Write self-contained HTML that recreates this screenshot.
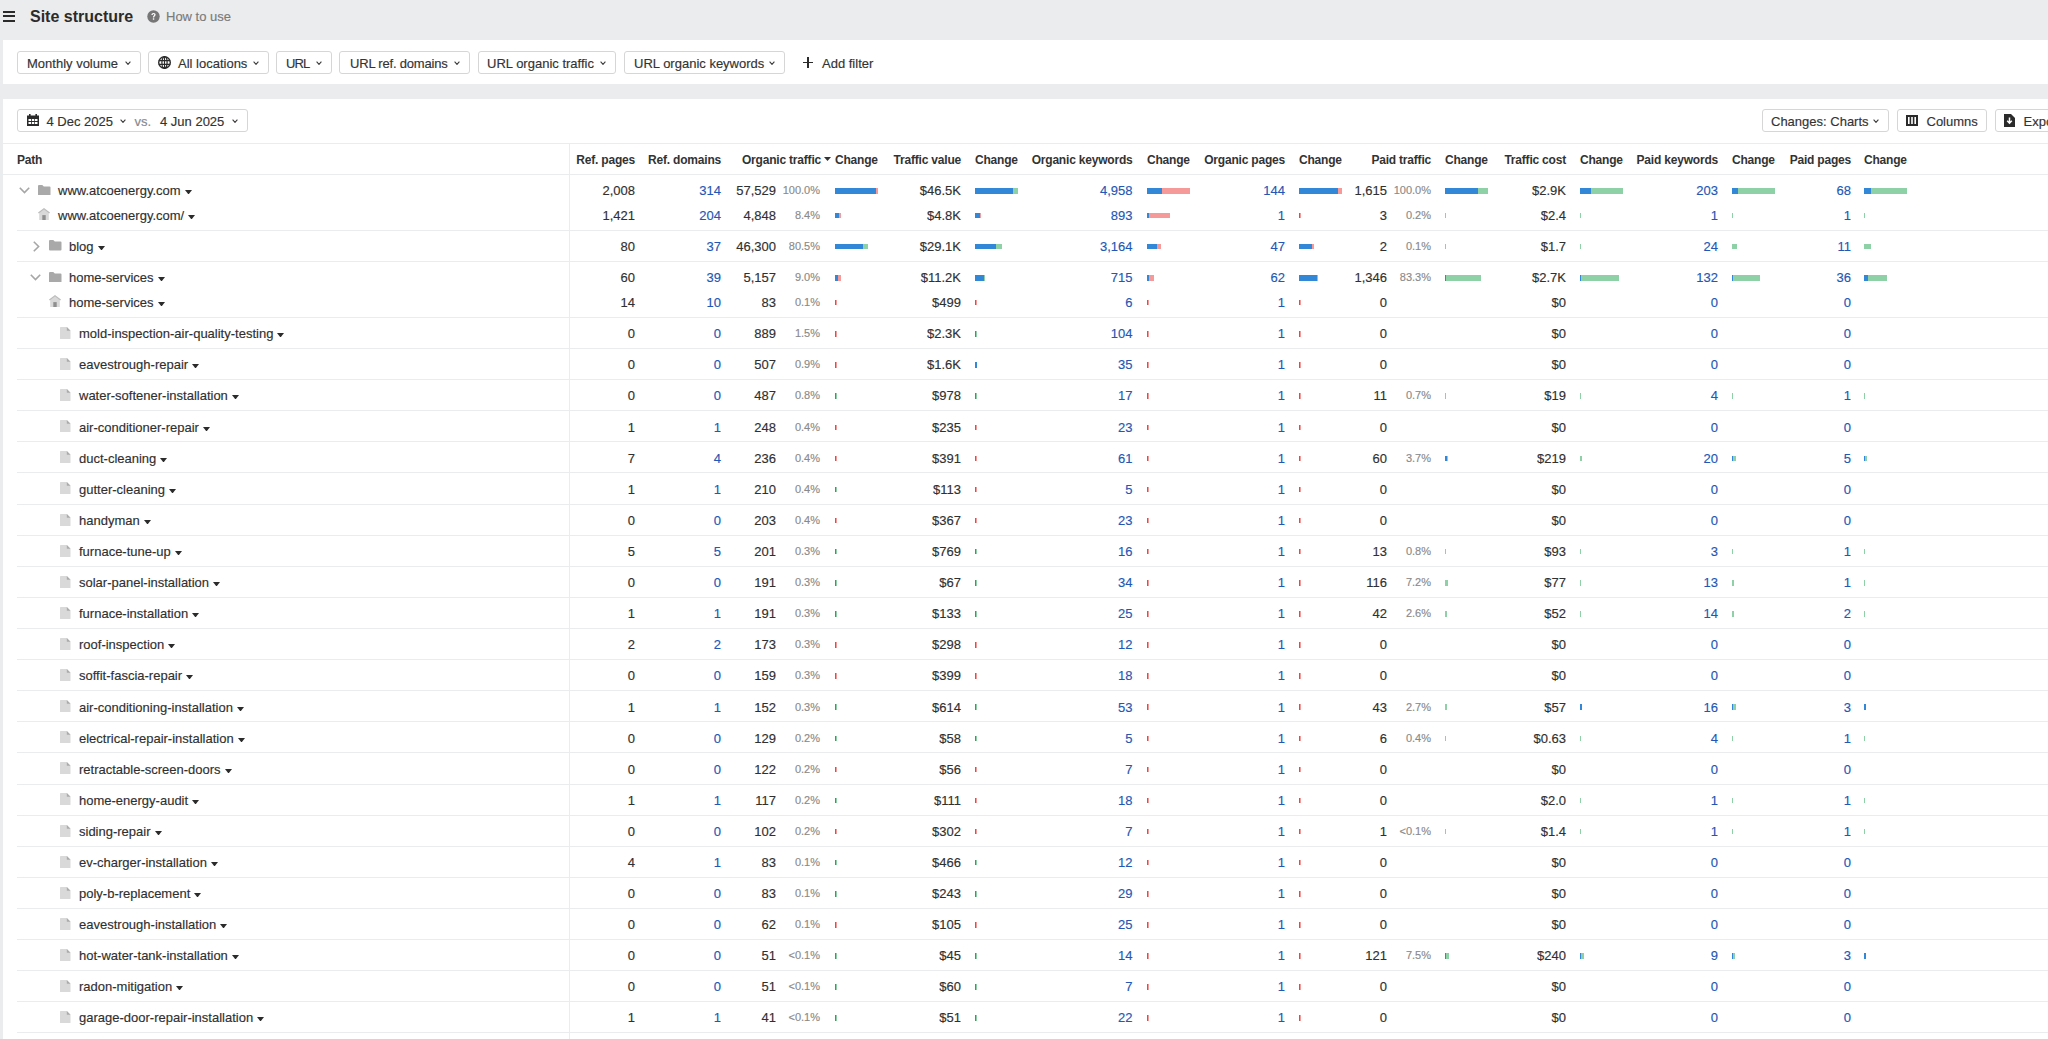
<!DOCTYPE html><html><head><meta charset="utf-8"><style>
html,body{margin:0;padding:0}
body{width:2048px;height:1039px;overflow:hidden;background:#ebecee;position:relative;font-family:"Liberation Sans", sans-serif;}
.t{position:absolute;white-space:nowrap;line-height:1;-webkit-text-stroke:0.15px currentColor;}
.b{position:absolute;}
.btn{position:absolute;box-sizing:border-box;border:1px solid #d6d6d6;border-radius:3px;background:#fff;}
</style></head><body>

<div class="b" style="left:3px;top:11px;width:12px;height:2px;background:#2b2b2b;"></div>
<div class="b" style="left:3px;top:15px;width:12px;height:2px;background:#2b2b2b;"></div>
<div class="b" style="left:3px;top:19.5px;width:12px;height:2px;background:#2b2b2b;"></div>
<div class="t" style="left:30px;top:8.80px;font-size:16px;font-weight:bold;color:#2b2b2b;-webkit-text-stroke:0;">Site structure</div>
<svg class="b" style="left:147px;top:9.6px" width="13" height="13" viewBox="0 0 13 13"><circle cx="6.5" cy="6.5" r="6.2" fill="#767676"/><path d="M4.4 4.9 C4.4 3.6 5.3 2.9 6.5 2.9 C7.8 2.9 8.6 3.7 8.6 4.7 C8.6 5.9 7.2 6.1 7.2 7.4 L5.9 7.4 C5.9 5.8 7.3 5.6 7.3 4.8 C7.3 4.3 7 4 6.5 4 C6 4 5.7 4.4 5.7 4.9 Z" fill="#fff"/><rect x="5.85" y="8.3" width="1.4" height="1.4" fill="#fff"/></svg>
<div class="t" style="left:166px;top:10.20px;font-size:13px;font-weight:normal;color:#7a7a7a;">How to use</div>
<div class="b" style="left:3px;top:40px;width:2045px;height:44px;background:#fff;"></div>
<div class="btn" style="left:17px;top:51px;width:124px;height:23px"></div>
<div class="t" style="left:27px;top:56.80px;font-size:13px;font-weight:normal;color:#333;">Monthly volume</div>
<svg class="b" style="left:125px;top:60.5px" width="6" height="4" viewBox="0 0 6 4"><path d="M0.6 0.6 L3.0 3.4 L5.4 0.6" fill="none" stroke="#3a3a3a" stroke-width="1.05"/></svg>
<div class="btn" style="left:148px;top:51px;width:121px;height:23px"></div>
<svg class="b" style="left:158px;top:56px" width="13" height="13" viewBox="0 0 13 13"><circle cx="6.5" cy="6.5" r="5.8" fill="none" stroke="#2b2b2b" stroke-width="1.4"/><ellipse cx="6.5" cy="6.5" rx="2.6" ry="5.8" fill="none" stroke="#2b2b2b" stroke-width="1.2"/><path d="M0.8 4.6 H12.2 M0.8 8.4 H12.2 M6.5 0.7 V12.3" stroke="#2b2b2b" stroke-width="1.1"/></svg>
<div class="t" style="left:178px;top:56.80px;font-size:13px;font-weight:normal;color:#333;">All locations</div>
<svg class="b" style="left:253px;top:60.5px" width="6" height="4" viewBox="0 0 6 4"><path d="M0.6 0.6 L3.0 3.4 L5.4 0.6" fill="none" stroke="#3a3a3a" stroke-width="1.05"/></svg>
<div class="btn" style="left:276px;top:51px;width:56px;height:23px"></div>
<div class="t" style="left:286px;top:56.80px;font-size:13px;font-weight:normal;color:#333;letter-spacing:-0.9px;">URL</div>
<svg class="b" style="left:316px;top:60.5px" width="6" height="4" viewBox="0 0 6 4"><path d="M0.6 0.6 L3.0 3.4 L5.4 0.6" fill="none" stroke="#3a3a3a" stroke-width="1.05"/></svg>
<div class="btn" style="left:339px;top:51px;width:131px;height:23px"></div>
<div class="t" style="left:350px;top:56.80px;font-size:13px;font-weight:normal;color:#333;letter-spacing:-0.2px;">URL ref. domains</div>
<svg class="b" style="left:454px;top:60.5px" width="6" height="4" viewBox="0 0 6 4"><path d="M0.6 0.6 L3.0 3.4 L5.4 0.6" fill="none" stroke="#3a3a3a" stroke-width="1.05"/></svg>
<div class="btn" style="left:477.5px;top:51px;width:138.0px;height:23px"></div>
<div class="t" style="left:487px;top:56.80px;font-size:13px;font-weight:normal;color:#333;">URL organic traffic</div>
<svg class="b" style="left:600px;top:60.5px" width="6" height="4" viewBox="0 0 6 4"><path d="M0.6 0.6 L3.0 3.4 L5.4 0.6" fill="none" stroke="#3a3a3a" stroke-width="1.05"/></svg>
<div class="btn" style="left:624px;top:51px;width:160.5px;height:23px"></div>
<div class="t" style="left:634px;top:56.80px;font-size:13px;font-weight:normal;color:#333;">URL organic keywords</div>
<svg class="b" style="left:769px;top:60.5px" width="6" height="4" viewBox="0 0 6 4"><path d="M0.6 0.6 L3.0 3.4 L5.4 0.6" fill="none" stroke="#3a3a3a" stroke-width="1.05"/></svg>
<div class="b" style="left:802.5px;top:61.5px;width:10.5px;height:1.6px;background:#2b2b2b;"></div>
<div class="b" style="left:807px;top:57px;width:1.6px;height:10.5px;background:#2b2b2b;"></div>
<div class="t" style="left:822px;top:56.80px;font-size:13px;font-weight:normal;color:#333;">Add filter</div>
<div class="b" style="left:3px;top:99px;width:2045px;height:940px;background:#fff;"></div>
<div class="btn" style="left:17px;top:109px;width:230.5px;height:23px"></div>
<svg class="b" style="left:27px;top:114px" width="12" height="12" viewBox="0 0 12 12"><rect x="0" y="1.5" width="12" height="10.5" fill="#2b2b2b"/><rect x="2" y="0" width="1.6" height="2" fill="#2b2b2b"/><rect x="8.4" y="0" width="1.6" height="2" fill="#2b2b2b"/><rect x="1.5" y="5" width="2.5" height="2" fill="#fff"/><rect x="4.8" y="5" width="2.5" height="2" fill="#fff"/><rect x="8" y="5" width="2.5" height="2" fill="#fff"/><rect x="1.5" y="8" width="2.5" height="2" fill="#fff"/><rect x="4.8" y="8" width="2.5" height="2" fill="#fff"/><rect x="8" y="8" width="2.5" height="2" fill="#fff"/></svg>
<div class="t" style="left:46.5px;top:115.20px;font-size:13px;font-weight:normal;color:#333;">4 Dec 2025</div>
<svg class="b" style="left:120px;top:119px" width="6" height="4" viewBox="0 0 6 4"><path d="M0.6 0.6 L3.0 3.4 L5.4 0.6" fill="none" stroke="#3a3a3a" stroke-width="1.05"/></svg>
<div class="t" style="left:134.5px;top:115.20px;font-size:13px;font-weight:normal;color:#888;">vs.</div>
<div class="t" style="left:160px;top:115.20px;font-size:13px;font-weight:normal;color:#333;">4 Jun 2025</div>
<svg class="b" style="left:231.5px;top:119px" width="6" height="4" viewBox="0 0 6 4"><path d="M0.6 0.6 L3.0 3.4 L5.4 0.6" fill="none" stroke="#3a3a3a" stroke-width="1.05"/></svg>
<div class="btn" style="left:1761.5px;top:109px;width:127.5px;height:23px"></div>
<div class="t" style="left:1771px;top:115.20px;font-size:13px;font-weight:normal;color:#333;">Changes: Charts</div>
<svg class="b" style="left:1873px;top:119px" width="6" height="4" viewBox="0 0 6 4"><path d="M0.6 0.6 L3.0 3.4 L5.4 0.6" fill="none" stroke="#3a3a3a" stroke-width="1.05"/></svg>
<div class="btn" style="left:1896.5px;top:109px;width:90.5px;height:23px"></div>
<svg class="b" style="left:1906px;top:115px" width="12" height="11" viewBox="0 0 12 11"><rect x="0" y="0" width="12" height="11" fill="#2b2b2b"/><rect x="2" y="2" width="1.6" height="7" fill="#fff"/><rect x="5.2" y="2" width="1.6" height="7" fill="#fff"/><rect x="8.4" y="2" width="1.6" height="7" fill="#fff"/></svg>
<div class="t" style="left:1926.5px;top:115.20px;font-size:13px;font-weight:normal;color:#333;">Columns</div>
<div class="btn" style="left:1994.5px;top:109px;width:65.5px;height:23px"></div>
<svg class="b" style="left:2004px;top:114px" width="11" height="13" viewBox="0 0 11 13"><path d="M0 0 H7 L11 4 V13 H0 Z" fill="#2b2b2b"/><path d="M5.5 3.5 V9 M3.2 6.8 L5.5 9.2 L7.8 6.8" stroke="#fff" stroke-width="1.5" fill="none"/></svg>
<div class="t" style="left:2023.5px;top:115.20px;font-size:13px;font-weight:normal;color:#333;">Export</div>
<div class="b" style="left:3px;top:143px;width:2045px;height:1px;background:#ebecee;"></div>
<div class="b" style="left:3px;top:174px;width:2045px;height:1px;background:#ebecee;"></div>
<div class="b" style="left:569px;top:143px;width:1px;height:900px;background:#ebecee;"></div>
<div class="t" style="left:17px;top:153.50px;font-size:12px;font-weight:bold;color:#333;letter-spacing:-0.2px;-webkit-text-stroke:0;">Path</div>
<div class="t r" style="right:1413px;top:153.50px;font-size:12px;font-weight:bold;color:#333;letter-spacing:-0.2px;-webkit-text-stroke:0;">Ref. pages</div>
<div class="t r" style="right:1327px;top:153.50px;font-size:12px;font-weight:bold;color:#333;letter-spacing:-0.2px;-webkit-text-stroke:0;">Ref. domains</div>
<div class="t r" style="right:1227px;top:153.50px;font-size:12px;font-weight:bold;color:#333;letter-spacing:-0.2px;-webkit-text-stroke:0;">Organic traffic</div>
<svg class="b" style="left:824px;top:157px" width="7" height="4" viewBox="0 0 7 4"><path d="M0 0 L7 0 L3.5 4 Z" fill="#333"/></svg>
<div class="t" style="left:835px;top:153.50px;font-size:12px;font-weight:bold;color:#333;letter-spacing:-0.2px;-webkit-text-stroke:0;">Change</div>
<div class="t" style="left:975px;top:153.50px;font-size:12px;font-weight:bold;color:#333;letter-spacing:-0.2px;-webkit-text-stroke:0;">Change</div>
<div class="t" style="left:1147px;top:153.50px;font-size:12px;font-weight:bold;color:#333;letter-spacing:-0.2px;-webkit-text-stroke:0;">Change</div>
<div class="t" style="left:1299px;top:153.50px;font-size:12px;font-weight:bold;color:#333;letter-spacing:-0.2px;-webkit-text-stroke:0;">Change</div>
<div class="t" style="left:1445px;top:153.50px;font-size:12px;font-weight:bold;color:#333;letter-spacing:-0.2px;-webkit-text-stroke:0;">Change</div>
<div class="t" style="left:1580px;top:153.50px;font-size:12px;font-weight:bold;color:#333;letter-spacing:-0.2px;-webkit-text-stroke:0;">Change</div>
<div class="t" style="left:1732px;top:153.50px;font-size:12px;font-weight:bold;color:#333;letter-spacing:-0.2px;-webkit-text-stroke:0;">Change</div>
<div class="t" style="left:1864px;top:153.50px;font-size:12px;font-weight:bold;color:#333;letter-spacing:-0.2px;-webkit-text-stroke:0;">Change</div>
<div class="t r" style="right:1087px;top:153.50px;font-size:12px;font-weight:bold;color:#333;letter-spacing:-0.2px;-webkit-text-stroke:0;">Traffic value</div>
<div class="t r" style="right:915.5px;top:153.50px;font-size:12px;font-weight:bold;color:#333;letter-spacing:-0.2px;-webkit-text-stroke:0;">Organic keywords</div>
<div class="t r" style="right:763px;top:153.50px;font-size:12px;font-weight:bold;color:#333;letter-spacing:-0.2px;-webkit-text-stroke:0;">Organic pages</div>
<div class="t r" style="right:617px;top:153.50px;font-size:12px;font-weight:bold;color:#333;letter-spacing:-0.2px;-webkit-text-stroke:0;">Paid traffic</div>
<div class="t r" style="right:482px;top:153.50px;font-size:12px;font-weight:bold;color:#333;letter-spacing:-0.2px;-webkit-text-stroke:0;">Traffic cost</div>
<div class="t r" style="right:330px;top:153.50px;font-size:12px;font-weight:bold;color:#333;letter-spacing:-0.2px;-webkit-text-stroke:0;">Paid keywords</div>
<div class="t r" style="right:197px;top:153.50px;font-size:12px;font-weight:bold;color:#333;letter-spacing:-0.2px;-webkit-text-stroke:0;">Paid pages</div>
<svg class="b" style="left:19px;top:186.9px" width="11" height="7" viewBox="0 0 11 7"><path d="M0.8 0.8 L5.5 5.6 L10.2 0.8" fill="none" stroke="#a6a6a6" stroke-width="1.6"/></svg>
<svg class="b" style="left:38px;top:184.7px" width="12.5" height="10.5" viewBox="0 0 12.5 10.5"><path d="M0 1 Q0 0 1 0 H4.3 L5.8 1.5 H11.5 Q12.5 1.5 12.5 2.5 V9.5 Q12.5 10.5 11.5 10.5 H1 Q0 10.5 0 9.5 Z" fill="#a9a9a9"/></svg>
<div class="t" style="left:58px;top:184.00px;font-size:13px;color:#303030">www.atcoenergy.com<span style="display:inline-block;width:4px"></span><svg style="vertical-align:1px" width="7" height="4.5" viewBox="0 0 7 4.5"><path d="M0 0 L7 0 L3.5 4.5 Z" fill="#2b2b2b"/></svg></div>
<div class="t r" style="right:1413px;top:184.00px;font-size:13px;font-weight:normal;color:#303030;">2,008</div>
<div class="t r" style="right:1327px;top:184.00px;font-size:13px;font-weight:normal;color:#2357b5;">314</div>
<div class="t r" style="right:1272px;top:184.00px;font-size:13px;font-weight:normal;color:#303030;">57,529</div>
<div class="t r" style="right:1228px;top:185.20px;font-size:11px;font-weight:normal;color:#8a8a8a;">100.0%</div>
<div class="t r" style="right:1087px;top:184.00px;font-size:13px;font-weight:normal;color:#303030;">$46.5K</div>
<div class="t r" style="right:915.5px;top:184.00px;font-size:13px;font-weight:normal;color:#2357b5;">4,958</div>
<div class="t r" style="right:763px;top:184.00px;font-size:13px;font-weight:normal;color:#2357b5;">144</div>
<div class="t r" style="right:661px;top:184.00px;font-size:13px;font-weight:normal;color:#303030;">1,615</div>
<div class="t r" style="right:617px;top:185.20px;font-size:11px;font-weight:normal;color:#8a8a8a;">100.0%</div>
<div class="t r" style="right:482px;top:184.00px;font-size:13px;font-weight:normal;color:#303030;">$2.9K</div>
<div class="t r" style="right:330px;top:184.00px;font-size:13px;font-weight:normal;color:#2357b5;">203</div>
<div class="t r" style="right:197px;top:184.00px;font-size:13px;font-weight:normal;color:#2357b5;">68</div>
<div class="b" style="left:835px;top:188.25px;width:41px;height:5.5px;background:#3287d6;"></div>
<div class="b" style="left:876px;top:188.25px;width:1.5px;height:5.5px;background:#f59a99;"></div>
<div class="b" style="left:975px;top:188.25px;width:37.5px;height:5.5px;background:#3287d6;"></div>
<div class="b" style="left:1012.5px;top:188.25px;width:5.5px;height:5.5px;background:#8fd1a7;"></div>
<div class="b" style="left:1147px;top:188.25px;width:14.7px;height:5.5px;background:#3287d6;"></div>
<div class="b" style="left:1161.7px;top:188.25px;width:28.3px;height:5.5px;background:#f59a99;"></div>
<div class="b" style="left:1299px;top:188.25px;width:38.6px;height:5.5px;background:#3287d6;"></div>
<div class="b" style="left:1337.6px;top:188.25px;width:4.4px;height:5.5px;background:#f59a99;"></div>
<div class="b" style="left:1445px;top:188.25px;width:33px;height:5.5px;background:#3287d6;"></div>
<div class="b" style="left:1478px;top:188.25px;width:10px;height:5.5px;background:#8fd1a7;"></div>
<div class="b" style="left:1580px;top:188.25px;width:11.4px;height:5.5px;background:#3287d6;"></div>
<div class="b" style="left:1591.4px;top:188.25px;width:31.6px;height:5.5px;background:#8fd1a7;"></div>
<div class="b" style="left:1732px;top:188.25px;width:5.8px;height:5.5px;background:#3287d6;"></div>
<div class="b" style="left:1737.8px;top:188.25px;width:37.2px;height:5.5px;background:#8fd1a7;"></div>
<div class="b" style="left:1864px;top:188.25px;width:6.8px;height:5.5px;background:#3287d6;"></div>
<div class="b" style="left:1870.8px;top:188.25px;width:36.2px;height:5.5px;background:#8fd1a7;"></div>
<div class="b" style="left:17px;top:230px;width:2031px;height:1px;background:#ebecee;"></div>
<svg class="b" style="left:38px;top:207.89999999999998px" width="12" height="12" viewBox="0 0 12 12"><path d="M1.2 4.9 L6 1.0 L10.8 4.9 V12 H1.2 Z" fill="#d9d9d9"/><path d="M0 4.6 L6 0 L12 4.6 L11.1 5.5 L6 1.6 L0.9 5.5 Z" fill="#bcbcbc"/><rect x="4.3" y="7.1" width="3.4" height="4.9" fill="#8f8f8f"/></svg>
<div class="t" style="left:58px;top:209.00px;font-size:13px;color:#303030">www.atcoenergy.com/<span style="display:inline-block;width:4px"></span><svg style="vertical-align:1px" width="7" height="4.5" viewBox="0 0 7 4.5"><path d="M0 0 L7 0 L3.5 4.5 Z" fill="#2b2b2b"/></svg></div>
<div class="t r" style="right:1413px;top:209.00px;font-size:13px;font-weight:normal;color:#303030;">1,421</div>
<div class="t r" style="right:1327px;top:209.00px;font-size:13px;font-weight:normal;color:#2357b5;">204</div>
<div class="t r" style="right:1272px;top:209.00px;font-size:13px;font-weight:normal;color:#303030;">4,848</div>
<div class="t r" style="right:1228px;top:210.20px;font-size:11px;font-weight:normal;color:#8a8a8a;">8.4%</div>
<div class="t r" style="right:1087px;top:209.00px;font-size:13px;font-weight:normal;color:#303030;">$4.8K</div>
<div class="t r" style="right:915.5px;top:209.00px;font-size:13px;font-weight:normal;color:#2357b5;">893</div>
<div class="t r" style="right:763px;top:209.00px;font-size:13px;font-weight:normal;color:#2357b5;">1</div>
<div class="t r" style="right:661px;top:209.00px;font-size:13px;font-weight:normal;color:#303030;">3</div>
<div class="t r" style="right:617px;top:210.20px;font-size:11px;font-weight:normal;color:#8a8a8a;">0.2%</div>
<div class="t r" style="right:482px;top:209.00px;font-size:13px;font-weight:normal;color:#303030;">$2.4</div>
<div class="t r" style="right:330px;top:209.00px;font-size:13px;font-weight:normal;color:#2357b5;">1</div>
<div class="t r" style="right:197px;top:209.00px;font-size:13px;font-weight:normal;color:#2357b5;">1</div>
<div class="b" style="left:835px;top:212.95px;width:4px;height:5.5px;background:#3287d6;"></div>
<div class="b" style="left:839px;top:212.95px;width:2px;height:5.5px;background:#f59a99;"></div>
<div class="b" style="left:975px;top:212.95px;width:4.5px;height:5.5px;background:#3287d6;"></div>
<div class="b" style="left:979.5px;top:212.95px;width:1.5px;height:5.5px;background:#f59a99;"></div>
<div class="b" style="left:1147px;top:212.95px;width:2px;height:5.5px;background:#3287d6;"></div>
<div class="b" style="left:1149px;top:212.95px;width:21px;height:5.5px;background:#f59a99;"></div>
<div class="b" style="left:1299px;top:212.95px;width:1px;height:5.5px;background:#3287d6;"></div>
<div class="b" style="left:1300px;top:212.95px;width:1px;height:5.5px;background:#f59a99;"></div>
<div class="b" style="left:1445px;top:212.95px;width:1px;height:5.5px;background:#8fd1a7;"></div>
<div class="b" style="left:1580px;top:212.95px;width:1px;height:5.5px;background:#8fd1a7;"></div>
<div class="b" style="left:1732px;top:212.95px;width:1px;height:5.5px;background:#8fd1a7;"></div>
<div class="b" style="left:1864px;top:212.95px;width:1px;height:5.5px;background:#8fd1a7;"></div>
<svg class="b" style="left:33px;top:240.7px" width="7" height="11" viewBox="0 0 7 11"><path d="M0.8 0.8 L5.6 5.5 L0.8 10.2" fill="none" stroke="#a6a6a6" stroke-width="1.6"/></svg>
<svg class="b" style="left:49px;top:240.39999999999998px" width="12.5" height="10.5" viewBox="0 0 12.5 10.5"><path d="M0 1 Q0 0 1 0 H4.3 L5.8 1.5 H11.5 Q12.5 1.5 12.5 2.5 V9.5 Q12.5 10.5 11.5 10.5 H1 Q0 10.5 0 9.5 Z" fill="#a9a9a9"/></svg>
<div class="t" style="left:69px;top:240.00px;font-size:13px;color:#303030">blog<span style="display:inline-block;width:4px"></span><svg style="vertical-align:1px" width="7" height="4.5" viewBox="0 0 7 4.5"><path d="M0 0 L7 0 L3.5 4.5 Z" fill="#2b2b2b"/></svg></div>
<div class="t r" style="right:1413px;top:240.00px;font-size:13px;font-weight:normal;color:#303030;">80</div>
<div class="t r" style="right:1327px;top:240.00px;font-size:13px;font-weight:normal;color:#2357b5;">37</div>
<div class="t r" style="right:1272px;top:240.00px;font-size:13px;font-weight:normal;color:#303030;">46,300</div>
<div class="t r" style="right:1228px;top:241.20px;font-size:11px;font-weight:normal;color:#8a8a8a;">80.5%</div>
<div class="t r" style="right:1087px;top:240.00px;font-size:13px;font-weight:normal;color:#303030;">$29.1K</div>
<div class="t r" style="right:915.5px;top:240.00px;font-size:13px;font-weight:normal;color:#2357b5;">3,164</div>
<div class="t r" style="right:763px;top:240.00px;font-size:13px;font-weight:normal;color:#2357b5;">47</div>
<div class="t r" style="right:661px;top:240.00px;font-size:13px;font-weight:normal;color:#303030;">2</div>
<div class="t r" style="right:617px;top:241.20px;font-size:11px;font-weight:normal;color:#8a8a8a;">0.1%</div>
<div class="t r" style="right:482px;top:240.00px;font-size:13px;font-weight:normal;color:#303030;">$1.7</div>
<div class="t r" style="right:330px;top:240.00px;font-size:13px;font-weight:normal;color:#2357b5;">24</div>
<div class="t r" style="right:197px;top:240.00px;font-size:13px;font-weight:normal;color:#2357b5;">11</div>
<div class="b" style="left:835px;top:243.95px;width:27.5px;height:5.5px;background:#3287d6;"></div>
<div class="b" style="left:862.5px;top:243.95px;width:5px;height:5.5px;background:#8fd1a7;"></div>
<div class="b" style="left:975px;top:243.95px;width:20.5px;height:5.5px;background:#3287d6;"></div>
<div class="b" style="left:995.5px;top:243.95px;width:6px;height:5.5px;background:#8fd1a7;"></div>
<div class="b" style="left:1147px;top:243.95px;width:10px;height:5.5px;background:#3287d6;"></div>
<div class="b" style="left:1157px;top:243.95px;width:4px;height:5.5px;background:#f59a99;"></div>
<div class="b" style="left:1299px;top:243.95px;width:13px;height:5.5px;background:#3287d6;"></div>
<div class="b" style="left:1312px;top:243.95px;width:1.5px;height:5.5px;background:#f59a99;"></div>
<div class="b" style="left:1445px;top:243.95px;width:1px;height:5.5px;background:#8fd1a7;"></div>
<div class="b" style="left:1580px;top:243.95px;width:1px;height:5.5px;background:#8fd1a7;"></div>
<div class="b" style="left:1732px;top:243.95px;width:5px;height:5.5px;background:#8fd1a7;"></div>
<div class="b" style="left:1864px;top:243.95px;width:6.5px;height:5.5px;background:#8fd1a7;"></div>
<div class="b" style="left:17px;top:261px;width:2031px;height:1px;background:#ebecee;"></div>
<svg class="b" style="left:30px;top:273.9px" width="11" height="7" viewBox="0 0 11 7"><path d="M0.8 0.8 L5.5 5.6 L10.2 0.8" fill="none" stroke="#a6a6a6" stroke-width="1.6"/></svg>
<svg class="b" style="left:49px;top:271.7px" width="12.5" height="10.5" viewBox="0 0 12.5 10.5"><path d="M0 1 Q0 0 1 0 H4.3 L5.8 1.5 H11.5 Q12.5 1.5 12.5 2.5 V9.5 Q12.5 10.5 11.5 10.5 H1 Q0 10.5 0 9.5 Z" fill="#a9a9a9"/></svg>
<div class="t" style="left:69px;top:271.00px;font-size:13px;color:#303030">home-services<span style="display:inline-block;width:4px"></span><svg style="vertical-align:1px" width="7" height="4.5" viewBox="0 0 7 4.5"><path d="M0 0 L7 0 L3.5 4.5 Z" fill="#2b2b2b"/></svg></div>
<div class="t r" style="right:1413px;top:271.00px;font-size:13px;font-weight:normal;color:#303030;">60</div>
<div class="t r" style="right:1327px;top:271.00px;font-size:13px;font-weight:normal;color:#2357b5;">39</div>
<div class="t r" style="right:1272px;top:271.00px;font-size:13px;font-weight:normal;color:#303030;">5,157</div>
<div class="t r" style="right:1228px;top:272.20px;font-size:11px;font-weight:normal;color:#8a8a8a;">9.0%</div>
<div class="t r" style="right:1087px;top:271.00px;font-size:13px;font-weight:normal;color:#303030;">$11.2K</div>
<div class="t r" style="right:915.5px;top:271.00px;font-size:13px;font-weight:normal;color:#2357b5;">715</div>
<div class="t r" style="right:763px;top:271.00px;font-size:13px;font-weight:normal;color:#2357b5;">62</div>
<div class="t r" style="right:661px;top:271.00px;font-size:13px;font-weight:normal;color:#303030;">1,346</div>
<div class="t r" style="right:617px;top:272.20px;font-size:11px;font-weight:normal;color:#8a8a8a;">83.3%</div>
<div class="t r" style="right:482px;top:271.00px;font-size:13px;font-weight:normal;color:#303030;">$2.7K</div>
<div class="t r" style="right:330px;top:271.00px;font-size:13px;font-weight:normal;color:#2357b5;">132</div>
<div class="t r" style="right:197px;top:271.00px;font-size:13px;font-weight:normal;color:#2357b5;">36</div>
<div class="b" style="left:835px;top:275.25px;width:3px;height:5.5px;background:#3287d6;"></div>
<div class="b" style="left:838px;top:275.25px;width:3px;height:5.5px;background:#f59a99;"></div>
<div class="b" style="left:975px;top:275.25px;width:8.5px;height:5.5px;background:#3287d6;"></div>
<div class="b" style="left:983.5px;top:275.25px;width:1px;height:5.5px;background:#8fd1a7;"></div>
<div class="b" style="left:1147px;top:275.25px;width:2px;height:5.5px;background:#3287d6;"></div>
<div class="b" style="left:1149px;top:275.25px;width:5px;height:5.5px;background:#f59a99;"></div>
<div class="b" style="left:1299px;top:275.25px;width:17.5px;height:5.5px;background:#3287d6;"></div>
<div class="b" style="left:1316.5px;top:275.25px;width:1.5px;height:5.5px;background:#f59a99;"></div>
<div class="b" style="left:1445px;top:275.25px;width:1px;height:5.5px;background:#3287d6;"></div>
<div class="b" style="left:1446px;top:275.25px;width:35px;height:5.5px;background:#8fd1a7;"></div>
<div class="b" style="left:1580px;top:275.25px;width:1px;height:5.5px;background:#3287d6;"></div>
<div class="b" style="left:1581px;top:275.25px;width:38px;height:5.5px;background:#8fd1a7;"></div>
<div class="b" style="left:1732px;top:275.25px;width:1px;height:5.5px;background:#3287d6;"></div>
<div class="b" style="left:1733px;top:275.25px;width:27px;height:5.5px;background:#8fd1a7;"></div>
<div class="b" style="left:1864px;top:275.25px;width:4px;height:5.5px;background:#3287d6;"></div>
<div class="b" style="left:1868px;top:275.25px;width:18.5px;height:5.5px;background:#8fd1a7;"></div>
<svg class="b" style="left:49px;top:294.7px" width="12" height="12" viewBox="0 0 12 12"><path d="M1.2 4.9 L6 1.0 L10.8 4.9 V12 H1.2 Z" fill="#d9d9d9"/><path d="M0 4.6 L6 0 L12 4.6 L11.1 5.5 L6 1.6 L0.9 5.5 Z" fill="#bcbcbc"/><rect x="4.3" y="7.1" width="3.4" height="4.9" fill="#8f8f8f"/></svg>
<div class="t" style="left:69px;top:296.00px;font-size:13px;color:#303030">home-services<span style="display:inline-block;width:4px"></span><svg style="vertical-align:1px" width="7" height="4.5" viewBox="0 0 7 4.5"><path d="M0 0 L7 0 L3.5 4.5 Z" fill="#2b2b2b"/></svg></div>
<div class="t r" style="right:1413px;top:296.00px;font-size:13px;font-weight:normal;color:#303030;">14</div>
<div class="t r" style="right:1327px;top:296.00px;font-size:13px;font-weight:normal;color:#2357b5;">10</div>
<div class="t r" style="right:1272px;top:296.00px;font-size:13px;font-weight:normal;color:#303030;">83</div>
<div class="t r" style="right:1228px;top:297.20px;font-size:11px;font-weight:normal;color:#8a8a8a;">0.1%</div>
<div class="t r" style="right:1087px;top:296.00px;font-size:13px;font-weight:normal;color:#303030;">$499</div>
<div class="t r" style="right:915.5px;top:296.00px;font-size:13px;font-weight:normal;color:#2357b5;">6</div>
<div class="t r" style="right:763px;top:296.00px;font-size:13px;font-weight:normal;color:#2357b5;">1</div>
<div class="t r" style="right:661px;top:296.00px;font-size:13px;font-weight:normal;color:#303030;">0</div>
<div class="t r" style="right:482px;top:296.00px;font-size:13px;font-weight:normal;color:#303030;">$0</div>
<div class="t r" style="right:330px;top:296.00px;font-size:13px;font-weight:normal;color:#2357b5;">0</div>
<div class="t r" style="right:197px;top:296.00px;font-size:13px;font-weight:normal;color:#2357b5;">0</div>
<div class="b" style="left:835px;top:299.75px;width:1px;height:5.5px;background:#3287d6;"></div>
<div class="b" style="left:836px;top:299.75px;width:1px;height:5.5px;background:#f59a99;"></div>
<div class="b" style="left:975px;top:299.75px;width:1px;height:5.5px;background:#3287d6;"></div>
<div class="b" style="left:976px;top:299.75px;width:1px;height:5.5px;background:#f59a99;"></div>
<div class="b" style="left:1147px;top:299.75px;width:1px;height:5.5px;background:#3287d6;"></div>
<div class="b" style="left:1148px;top:299.75px;width:1px;height:5.5px;background:#f59a99;"></div>
<div class="b" style="left:1299px;top:299.75px;width:1px;height:5.5px;background:#3287d6;"></div>
<div class="b" style="left:1300px;top:299.75px;width:1px;height:5.5px;background:#f59a99;"></div>
<div class="b" style="left:17px;top:317px;width:2031px;height:1px;background:#ebecee;"></div>
<svg class="b" style="left:60px;top:326.9px" width="10.5" height="12" viewBox="0 0 10.5 12"><path d="M0.6 0 H6.8 L10.5 3.7 V11.4 Q10.5 12 9.9 12 H0.6 Q0 12 0 11.4 V0.6 Q0 0 0.6 0 Z" fill="#d9d9d9"/><path d="M6.8 0 L10.5 3.7 H6.8 Z" fill="#ababab"/></svg>
<div class="t" style="left:79px;top:327.00px;font-size:13px;color:#303030">mold-inspection-air-quality-testing<span style="display:inline-block;width:4px"></span><svg style="vertical-align:1px" width="7" height="4.5" viewBox="0 0 7 4.5"><path d="M0 0 L7 0 L3.5 4.5 Z" fill="#2b2b2b"/></svg></div>
<div class="t r" style="right:1413px;top:327.00px;font-size:13px;font-weight:normal;color:#303030;">0</div>
<div class="t r" style="right:1327px;top:327.00px;font-size:13px;font-weight:normal;color:#2357b5;">0</div>
<div class="t r" style="right:1272px;top:327.00px;font-size:13px;font-weight:normal;color:#303030;">889</div>
<div class="t r" style="right:1228px;top:328.20px;font-size:11px;font-weight:normal;color:#8a8a8a;">1.5%</div>
<div class="t r" style="right:1087px;top:327.00px;font-size:13px;font-weight:normal;color:#303030;">$2.3K</div>
<div class="t r" style="right:915.5px;top:327.00px;font-size:13px;font-weight:normal;color:#2357b5;">104</div>
<div class="t r" style="right:763px;top:327.00px;font-size:13px;font-weight:normal;color:#2357b5;">1</div>
<div class="t r" style="right:661px;top:327.00px;font-size:13px;font-weight:normal;color:#303030;">0</div>
<div class="t r" style="right:482px;top:327.00px;font-size:13px;font-weight:normal;color:#303030;">$0</div>
<div class="t r" style="right:330px;top:327.00px;font-size:13px;font-weight:normal;color:#2357b5;">0</div>
<div class="t r" style="right:197px;top:327.00px;font-size:13px;font-weight:normal;color:#2357b5;">0</div>
<div class="b" style="left:835px;top:331.25px;width:1px;height:5.5px;background:#3287d6;"></div>
<div class="b" style="left:836px;top:331.25px;width:1px;height:5.5px;background:#f59a99;"></div>
<div class="b" style="left:975px;top:331.25px;width:1px;height:5.5px;background:#3287d6;"></div>
<div class="b" style="left:976px;top:331.25px;width:1px;height:5.5px;background:#8fd1a7;"></div>
<div class="b" style="left:1147px;top:331.25px;width:1px;height:5.5px;background:#3287d6;"></div>
<div class="b" style="left:1148px;top:331.25px;width:1px;height:5.5px;background:#f59a99;"></div>
<div class="b" style="left:1299px;top:331.25px;width:1px;height:5.5px;background:#3287d6;"></div>
<div class="b" style="left:1300px;top:331.25px;width:1px;height:5.5px;background:#f59a99;"></div>
<div class="b" style="left:17px;top:348px;width:2031px;height:1px;background:#ebecee;"></div>
<svg class="b" style="left:60px;top:358.0px" width="10.5" height="12" viewBox="0 0 10.5 12"><path d="M0.6 0 H6.8 L10.5 3.7 V11.4 Q10.5 12 9.9 12 H0.6 Q0 12 0 11.4 V0.6 Q0 0 0.6 0 Z" fill="#d9d9d9"/><path d="M6.8 0 L10.5 3.7 H6.8 Z" fill="#ababab"/></svg>
<div class="t" style="left:79px;top:358.00px;font-size:13px;color:#303030">eavestrough-repair<span style="display:inline-block;width:4px"></span><svg style="vertical-align:1px" width="7" height="4.5" viewBox="0 0 7 4.5"><path d="M0 0 L7 0 L3.5 4.5 Z" fill="#2b2b2b"/></svg></div>
<div class="t r" style="right:1413px;top:358.00px;font-size:13px;font-weight:normal;color:#303030;">0</div>
<div class="t r" style="right:1327px;top:358.00px;font-size:13px;font-weight:normal;color:#2357b5;">0</div>
<div class="t r" style="right:1272px;top:358.00px;font-size:13px;font-weight:normal;color:#303030;">507</div>
<div class="t r" style="right:1228px;top:359.20px;font-size:11px;font-weight:normal;color:#8a8a8a;">0.9%</div>
<div class="t r" style="right:1087px;top:358.00px;font-size:13px;font-weight:normal;color:#303030;">$1.6K</div>
<div class="t r" style="right:915.5px;top:358.00px;font-size:13px;font-weight:normal;color:#2357b5;">35</div>
<div class="t r" style="right:763px;top:358.00px;font-size:13px;font-weight:normal;color:#2357b5;">1</div>
<div class="t r" style="right:661px;top:358.00px;font-size:13px;font-weight:normal;color:#303030;">0</div>
<div class="t r" style="right:482px;top:358.00px;font-size:13px;font-weight:normal;color:#303030;">$0</div>
<div class="t r" style="right:330px;top:358.00px;font-size:13px;font-weight:normal;color:#2357b5;">0</div>
<div class="t r" style="right:197px;top:358.00px;font-size:13px;font-weight:normal;color:#2357b5;">0</div>
<div class="b" style="left:835px;top:362.35px;width:1px;height:5.5px;background:#3287d6;"></div>
<div class="b" style="left:836px;top:362.35px;width:1px;height:5.5px;background:#f59a99;"></div>
<div class="b" style="left:975px;top:362.35px;width:2px;height:5.5px;background:#3287d6;"></div>
<div class="b" style="left:1147px;top:362.35px;width:1px;height:5.5px;background:#3287d6;"></div>
<div class="b" style="left:1148px;top:362.35px;width:1px;height:5.5px;background:#f59a99;"></div>
<div class="b" style="left:1299px;top:362.35px;width:1px;height:5.5px;background:#3287d6;"></div>
<div class="b" style="left:1300px;top:362.35px;width:1px;height:5.5px;background:#f59a99;"></div>
<div class="b" style="left:17px;top:379px;width:2031px;height:1px;background:#ebecee;"></div>
<svg class="b" style="left:60px;top:389.09999999999997px" width="10.5" height="12" viewBox="0 0 10.5 12"><path d="M0.6 0 H6.8 L10.5 3.7 V11.4 Q10.5 12 9.9 12 H0.6 Q0 12 0 11.4 V0.6 Q0 0 0.6 0 Z" fill="#d9d9d9"/><path d="M6.8 0 L10.5 3.7 H6.8 Z" fill="#ababab"/></svg>
<div class="t" style="left:79px;top:389.00px;font-size:13px;color:#303030">water-softener-installation<span style="display:inline-block;width:4px"></span><svg style="vertical-align:1px" width="7" height="4.5" viewBox="0 0 7 4.5"><path d="M0 0 L7 0 L3.5 4.5 Z" fill="#2b2b2b"/></svg></div>
<div class="t r" style="right:1413px;top:389.00px;font-size:13px;font-weight:normal;color:#303030;">0</div>
<div class="t r" style="right:1327px;top:389.00px;font-size:13px;font-weight:normal;color:#2357b5;">0</div>
<div class="t r" style="right:1272px;top:389.00px;font-size:13px;font-weight:normal;color:#303030;">487</div>
<div class="t r" style="right:1228px;top:390.20px;font-size:11px;font-weight:normal;color:#8a8a8a;">0.8%</div>
<div class="t r" style="right:1087px;top:389.00px;font-size:13px;font-weight:normal;color:#303030;">$978</div>
<div class="t r" style="right:915.5px;top:389.00px;font-size:13px;font-weight:normal;color:#2357b5;">17</div>
<div class="t r" style="right:763px;top:389.00px;font-size:13px;font-weight:normal;color:#2357b5;">1</div>
<div class="t r" style="right:661px;top:389.00px;font-size:13px;font-weight:normal;color:#303030;">11</div>
<div class="t r" style="right:617px;top:390.20px;font-size:11px;font-weight:normal;color:#8a8a8a;">0.7%</div>
<div class="t r" style="right:482px;top:389.00px;font-size:13px;font-weight:normal;color:#303030;">$19</div>
<div class="t r" style="right:330px;top:389.00px;font-size:13px;font-weight:normal;color:#2357b5;">4</div>
<div class="t r" style="right:197px;top:389.00px;font-size:13px;font-weight:normal;color:#2357b5;">1</div>
<div class="b" style="left:835px;top:393.45px;width:1px;height:5.5px;background:#3287d6;"></div>
<div class="b" style="left:836px;top:393.45px;width:1px;height:5.5px;background:#8fd1a7;"></div>
<div class="b" style="left:975px;top:393.45px;width:1px;height:5.5px;background:#3287d6;"></div>
<div class="b" style="left:976px;top:393.45px;width:1px;height:5.5px;background:#8fd1a7;"></div>
<div class="b" style="left:1147px;top:393.45px;width:1px;height:5.5px;background:#3287d6;"></div>
<div class="b" style="left:1148px;top:393.45px;width:1px;height:5.5px;background:#f59a99;"></div>
<div class="b" style="left:1299px;top:393.45px;width:1px;height:5.5px;background:#3287d6;"></div>
<div class="b" style="left:1300px;top:393.45px;width:1px;height:5.5px;background:#f59a99;"></div>
<div class="b" style="left:1445px;top:393.45px;width:1px;height:5.5px;background:#8fd1a7;"></div>
<div class="b" style="left:1580px;top:393.45px;width:1px;height:5.5px;background:#8fd1a7;"></div>
<div class="b" style="left:1732px;top:393.45px;width:1px;height:5.5px;background:#8fd1a7;"></div>
<div class="b" style="left:1864px;top:393.45px;width:1px;height:5.5px;background:#8fd1a7;"></div>
<div class="b" style="left:17px;top:410px;width:2031px;height:1px;background:#ebecee;"></div>
<svg class="b" style="left:60px;top:420.2px" width="10.5" height="12" viewBox="0 0 10.5 12"><path d="M0.6 0 H6.8 L10.5 3.7 V11.4 Q10.5 12 9.9 12 H0.6 Q0 12 0 11.4 V0.6 Q0 0 0.6 0 Z" fill="#d9d9d9"/><path d="M6.8 0 L10.5 3.7 H6.8 Z" fill="#ababab"/></svg>
<div class="t" style="left:79px;top:421.00px;font-size:13px;color:#303030">air-conditioner-repair<span style="display:inline-block;width:4px"></span><svg style="vertical-align:1px" width="7" height="4.5" viewBox="0 0 7 4.5"><path d="M0 0 L7 0 L3.5 4.5 Z" fill="#2b2b2b"/></svg></div>
<div class="t r" style="right:1413px;top:421.00px;font-size:13px;font-weight:normal;color:#303030;">1</div>
<div class="t r" style="right:1327px;top:421.00px;font-size:13px;font-weight:normal;color:#2357b5;">1</div>
<div class="t r" style="right:1272px;top:421.00px;font-size:13px;font-weight:normal;color:#303030;">248</div>
<div class="t r" style="right:1228px;top:422.20px;font-size:11px;font-weight:normal;color:#8a8a8a;">0.4%</div>
<div class="t r" style="right:1087px;top:421.00px;font-size:13px;font-weight:normal;color:#303030;">$235</div>
<div class="t r" style="right:915.5px;top:421.00px;font-size:13px;font-weight:normal;color:#2357b5;">23</div>
<div class="t r" style="right:763px;top:421.00px;font-size:13px;font-weight:normal;color:#2357b5;">1</div>
<div class="t r" style="right:661px;top:421.00px;font-size:13px;font-weight:normal;color:#303030;">0</div>
<div class="t r" style="right:482px;top:421.00px;font-size:13px;font-weight:normal;color:#303030;">$0</div>
<div class="t r" style="right:330px;top:421.00px;font-size:13px;font-weight:normal;color:#2357b5;">0</div>
<div class="t r" style="right:197px;top:421.00px;font-size:13px;font-weight:normal;color:#2357b5;">0</div>
<div class="b" style="left:835px;top:424.55px;width:1px;height:5.5px;background:#3287d6;"></div>
<div class="b" style="left:836px;top:424.55px;width:1px;height:5.5px;background:#f59a99;"></div>
<div class="b" style="left:975px;top:424.55px;width:1px;height:5.5px;background:#3287d6;"></div>
<div class="b" style="left:976px;top:424.55px;width:1px;height:5.5px;background:#f59a99;"></div>
<div class="b" style="left:1147px;top:424.55px;width:1px;height:5.5px;background:#3287d6;"></div>
<div class="b" style="left:1148px;top:424.55px;width:1px;height:5.5px;background:#f59a99;"></div>
<div class="b" style="left:1299px;top:424.55px;width:1px;height:5.5px;background:#3287d6;"></div>
<div class="b" style="left:1300px;top:424.55px;width:1px;height:5.5px;background:#f59a99;"></div>
<div class="b" style="left:17px;top:441px;width:2031px;height:1px;background:#ebecee;"></div>
<svg class="b" style="left:60px;top:451.29999999999995px" width="10.5" height="12" viewBox="0 0 10.5 12"><path d="M0.6 0 H6.8 L10.5 3.7 V11.4 Q10.5 12 9.9 12 H0.6 Q0 12 0 11.4 V0.6 Q0 0 0.6 0 Z" fill="#d9d9d9"/><path d="M6.8 0 L10.5 3.7 H6.8 Z" fill="#ababab"/></svg>
<div class="t" style="left:79px;top:452.00px;font-size:13px;color:#303030">duct-cleaning<span style="display:inline-block;width:4px"></span><svg style="vertical-align:1px" width="7" height="4.5" viewBox="0 0 7 4.5"><path d="M0 0 L7 0 L3.5 4.5 Z" fill="#2b2b2b"/></svg></div>
<div class="t r" style="right:1413px;top:452.00px;font-size:13px;font-weight:normal;color:#303030;">7</div>
<div class="t r" style="right:1327px;top:452.00px;font-size:13px;font-weight:normal;color:#2357b5;">4</div>
<div class="t r" style="right:1272px;top:452.00px;font-size:13px;font-weight:normal;color:#303030;">236</div>
<div class="t r" style="right:1228px;top:453.20px;font-size:11px;font-weight:normal;color:#8a8a8a;">0.4%</div>
<div class="t r" style="right:1087px;top:452.00px;font-size:13px;font-weight:normal;color:#303030;">$391</div>
<div class="t r" style="right:915.5px;top:452.00px;font-size:13px;font-weight:normal;color:#2357b5;">61</div>
<div class="t r" style="right:763px;top:452.00px;font-size:13px;font-weight:normal;color:#2357b5;">1</div>
<div class="t r" style="right:661px;top:452.00px;font-size:13px;font-weight:normal;color:#303030;">60</div>
<div class="t r" style="right:617px;top:453.20px;font-size:11px;font-weight:normal;color:#8a8a8a;">3.7%</div>
<div class="t r" style="right:482px;top:452.00px;font-size:13px;font-weight:normal;color:#303030;">$219</div>
<div class="t r" style="right:330px;top:452.00px;font-size:13px;font-weight:normal;color:#2357b5;">20</div>
<div class="t r" style="right:197px;top:452.00px;font-size:13px;font-weight:normal;color:#2357b5;">5</div>
<div class="b" style="left:835px;top:455.65px;width:1px;height:5.5px;background:#3287d6;"></div>
<div class="b" style="left:836px;top:455.65px;width:1px;height:5.5px;background:#f59a99;"></div>
<div class="b" style="left:975px;top:455.65px;width:1px;height:5.5px;background:#3287d6;"></div>
<div class="b" style="left:976px;top:455.65px;width:1px;height:5.5px;background:#f59a99;"></div>
<div class="b" style="left:1147px;top:455.65px;width:1px;height:5.5px;background:#3287d6;"></div>
<div class="b" style="left:1148px;top:455.65px;width:1px;height:5.5px;background:#f59a99;"></div>
<div class="b" style="left:1299px;top:455.65px;width:1px;height:5.5px;background:#3287d6;"></div>
<div class="b" style="left:1300px;top:455.65px;width:1px;height:5.5px;background:#f59a99;"></div>
<div class="b" style="left:1445px;top:455.65px;width:2px;height:5.5px;background:#3287d6;"></div>
<div class="b" style="left:1447px;top:455.65px;width:1px;height:5.5px;background:#8fd1a7;"></div>
<div class="b" style="left:1580px;top:455.65px;width:2px;height:5.5px;background:#8fd1a7;"></div>
<div class="b" style="left:1732px;top:455.65px;width:1px;height:5.5px;background:#3287d6;"></div>
<div class="b" style="left:1733px;top:455.65px;width:3px;height:5.5px;background:#8fd1a7;"></div>
<div class="b" style="left:1864px;top:455.65px;width:1px;height:5.5px;background:#3287d6;"></div>
<div class="b" style="left:1865px;top:455.65px;width:2px;height:5.5px;background:#8fd1a7;"></div>
<div class="b" style="left:17px;top:472px;width:2031px;height:1px;background:#ebecee;"></div>
<svg class="b" style="left:60px;top:482.4px" width="10.5" height="12" viewBox="0 0 10.5 12"><path d="M0.6 0 H6.8 L10.5 3.7 V11.4 Q10.5 12 9.9 12 H0.6 Q0 12 0 11.4 V0.6 Q0 0 0.6 0 Z" fill="#d9d9d9"/><path d="M6.8 0 L10.5 3.7 H6.8 Z" fill="#ababab"/></svg>
<div class="t" style="left:79px;top:483.00px;font-size:13px;color:#303030">gutter-cleaning<span style="display:inline-block;width:4px"></span><svg style="vertical-align:1px" width="7" height="4.5" viewBox="0 0 7 4.5"><path d="M0 0 L7 0 L3.5 4.5 Z" fill="#2b2b2b"/></svg></div>
<div class="t r" style="right:1413px;top:483.00px;font-size:13px;font-weight:normal;color:#303030;">1</div>
<div class="t r" style="right:1327px;top:483.00px;font-size:13px;font-weight:normal;color:#2357b5;">1</div>
<div class="t r" style="right:1272px;top:483.00px;font-size:13px;font-weight:normal;color:#303030;">210</div>
<div class="t r" style="right:1228px;top:484.20px;font-size:11px;font-weight:normal;color:#8a8a8a;">0.4%</div>
<div class="t r" style="right:1087px;top:483.00px;font-size:13px;font-weight:normal;color:#303030;">$113</div>
<div class="t r" style="right:915.5px;top:483.00px;font-size:13px;font-weight:normal;color:#2357b5;">5</div>
<div class="t r" style="right:763px;top:483.00px;font-size:13px;font-weight:normal;color:#2357b5;">1</div>
<div class="t r" style="right:661px;top:483.00px;font-size:13px;font-weight:normal;color:#303030;">0</div>
<div class="t r" style="right:482px;top:483.00px;font-size:13px;font-weight:normal;color:#303030;">$0</div>
<div class="t r" style="right:330px;top:483.00px;font-size:13px;font-weight:normal;color:#2357b5;">0</div>
<div class="t r" style="right:197px;top:483.00px;font-size:13px;font-weight:normal;color:#2357b5;">0</div>
<div class="b" style="left:835px;top:486.75px;width:1px;height:5.5px;background:#3287d6;"></div>
<div class="b" style="left:836px;top:486.75px;width:1px;height:5.5px;background:#8fd1a7;"></div>
<div class="b" style="left:975px;top:486.75px;width:1px;height:5.5px;background:#3287d6;"></div>
<div class="b" style="left:976px;top:486.75px;width:1px;height:5.5px;background:#f59a99;"></div>
<div class="b" style="left:1147px;top:486.75px;width:1px;height:5.5px;background:#3287d6;"></div>
<div class="b" style="left:1148px;top:486.75px;width:1px;height:5.5px;background:#f59a99;"></div>
<div class="b" style="left:1299px;top:486.75px;width:1px;height:5.5px;background:#3287d6;"></div>
<div class="b" style="left:1300px;top:486.75px;width:1px;height:5.5px;background:#f59a99;"></div>
<div class="b" style="left:17px;top:504px;width:2031px;height:1px;background:#ebecee;"></div>
<svg class="b" style="left:60px;top:513.5px" width="10.5" height="12" viewBox="0 0 10.5 12"><path d="M0.6 0 H6.8 L10.5 3.7 V11.4 Q10.5 12 9.9 12 H0.6 Q0 12 0 11.4 V0.6 Q0 0 0.6 0 Z" fill="#d9d9d9"/><path d="M6.8 0 L10.5 3.7 H6.8 Z" fill="#ababab"/></svg>
<div class="t" style="left:79px;top:514.00px;font-size:13px;color:#303030">handyman<span style="display:inline-block;width:4px"></span><svg style="vertical-align:1px" width="7" height="4.5" viewBox="0 0 7 4.5"><path d="M0 0 L7 0 L3.5 4.5 Z" fill="#2b2b2b"/></svg></div>
<div class="t r" style="right:1413px;top:514.00px;font-size:13px;font-weight:normal;color:#303030;">0</div>
<div class="t r" style="right:1327px;top:514.00px;font-size:13px;font-weight:normal;color:#2357b5;">0</div>
<div class="t r" style="right:1272px;top:514.00px;font-size:13px;font-weight:normal;color:#303030;">203</div>
<div class="t r" style="right:1228px;top:515.20px;font-size:11px;font-weight:normal;color:#8a8a8a;">0.4%</div>
<div class="t r" style="right:1087px;top:514.00px;font-size:13px;font-weight:normal;color:#303030;">$367</div>
<div class="t r" style="right:915.5px;top:514.00px;font-size:13px;font-weight:normal;color:#2357b5;">23</div>
<div class="t r" style="right:763px;top:514.00px;font-size:13px;font-weight:normal;color:#2357b5;">1</div>
<div class="t r" style="right:661px;top:514.00px;font-size:13px;font-weight:normal;color:#303030;">0</div>
<div class="t r" style="right:482px;top:514.00px;font-size:13px;font-weight:normal;color:#303030;">$0</div>
<div class="t r" style="right:330px;top:514.00px;font-size:13px;font-weight:normal;color:#2357b5;">0</div>
<div class="t r" style="right:197px;top:514.00px;font-size:13px;font-weight:normal;color:#2357b5;">0</div>
<div class="b" style="left:835px;top:517.85px;width:1px;height:5.5px;background:#3287d6;"></div>
<div class="b" style="left:836px;top:517.85px;width:1px;height:5.5px;background:#f59a99;"></div>
<div class="b" style="left:975px;top:517.85px;width:1px;height:5.5px;background:#3287d6;"></div>
<div class="b" style="left:976px;top:517.85px;width:1px;height:5.5px;background:#f59a99;"></div>
<div class="b" style="left:1147px;top:517.85px;width:1px;height:5.5px;background:#3287d6;"></div>
<div class="b" style="left:1148px;top:517.85px;width:1px;height:5.5px;background:#f59a99;"></div>
<div class="b" style="left:1299px;top:517.85px;width:1px;height:5.5px;background:#3287d6;"></div>
<div class="b" style="left:1300px;top:517.85px;width:1px;height:5.5px;background:#f59a99;"></div>
<div class="b" style="left:17px;top:535px;width:2031px;height:1px;background:#ebecee;"></div>
<svg class="b" style="left:60px;top:544.6px" width="10.5" height="12" viewBox="0 0 10.5 12"><path d="M0.6 0 H6.8 L10.5 3.7 V11.4 Q10.5 12 9.9 12 H0.6 Q0 12 0 11.4 V0.6 Q0 0 0.6 0 Z" fill="#d9d9d9"/><path d="M6.8 0 L10.5 3.7 H6.8 Z" fill="#ababab"/></svg>
<div class="t" style="left:79px;top:545.00px;font-size:13px;color:#303030">furnace-tune-up<span style="display:inline-block;width:4px"></span><svg style="vertical-align:1px" width="7" height="4.5" viewBox="0 0 7 4.5"><path d="M0 0 L7 0 L3.5 4.5 Z" fill="#2b2b2b"/></svg></div>
<div class="t r" style="right:1413px;top:545.00px;font-size:13px;font-weight:normal;color:#303030;">5</div>
<div class="t r" style="right:1327px;top:545.00px;font-size:13px;font-weight:normal;color:#2357b5;">5</div>
<div class="t r" style="right:1272px;top:545.00px;font-size:13px;font-weight:normal;color:#303030;">201</div>
<div class="t r" style="right:1228px;top:546.20px;font-size:11px;font-weight:normal;color:#8a8a8a;">0.3%</div>
<div class="t r" style="right:1087px;top:545.00px;font-size:13px;font-weight:normal;color:#303030;">$769</div>
<div class="t r" style="right:915.5px;top:545.00px;font-size:13px;font-weight:normal;color:#2357b5;">16</div>
<div class="t r" style="right:763px;top:545.00px;font-size:13px;font-weight:normal;color:#2357b5;">1</div>
<div class="t r" style="right:661px;top:545.00px;font-size:13px;font-weight:normal;color:#303030;">13</div>
<div class="t r" style="right:617px;top:546.20px;font-size:11px;font-weight:normal;color:#8a8a8a;">0.8%</div>
<div class="t r" style="right:482px;top:545.00px;font-size:13px;font-weight:normal;color:#303030;">$93</div>
<div class="t r" style="right:330px;top:545.00px;font-size:13px;font-weight:normal;color:#2357b5;">3</div>
<div class="t r" style="right:197px;top:545.00px;font-size:13px;font-weight:normal;color:#2357b5;">1</div>
<div class="b" style="left:835px;top:548.95px;width:1px;height:5.5px;background:#3287d6;"></div>
<div class="b" style="left:836px;top:548.95px;width:1px;height:5.5px;background:#8fd1a7;"></div>
<div class="b" style="left:975px;top:548.95px;width:1px;height:5.5px;background:#3287d6;"></div>
<div class="b" style="left:976px;top:548.95px;width:1px;height:5.5px;background:#8fd1a7;"></div>
<div class="b" style="left:1147px;top:548.95px;width:1px;height:5.5px;background:#3287d6;"></div>
<div class="b" style="left:1148px;top:548.95px;width:1px;height:5.5px;background:#f59a99;"></div>
<div class="b" style="left:1299px;top:548.95px;width:1px;height:5.5px;background:#3287d6;"></div>
<div class="b" style="left:1300px;top:548.95px;width:1px;height:5.5px;background:#f59a99;"></div>
<div class="b" style="left:1445px;top:548.95px;width:1px;height:5.5px;background:#8fd1a7;"></div>
<div class="b" style="left:1580px;top:548.95px;width:1px;height:5.5px;background:#8fd1a7;"></div>
<div class="b" style="left:1732px;top:548.95px;width:1px;height:5.5px;background:#8fd1a7;"></div>
<div class="b" style="left:1864px;top:548.95px;width:1px;height:5.5px;background:#8fd1a7;"></div>
<div class="b" style="left:17px;top:566px;width:2031px;height:1px;background:#ebecee;"></div>
<svg class="b" style="left:60px;top:575.6999999999999px" width="10.5" height="12" viewBox="0 0 10.5 12"><path d="M0.6 0 H6.8 L10.5 3.7 V11.4 Q10.5 12 9.9 12 H0.6 Q0 12 0 11.4 V0.6 Q0 0 0.6 0 Z" fill="#d9d9d9"/><path d="M6.8 0 L10.5 3.7 H6.8 Z" fill="#ababab"/></svg>
<div class="t" style="left:79px;top:576.00px;font-size:13px;color:#303030">solar-panel-installation<span style="display:inline-block;width:4px"></span><svg style="vertical-align:1px" width="7" height="4.5" viewBox="0 0 7 4.5"><path d="M0 0 L7 0 L3.5 4.5 Z" fill="#2b2b2b"/></svg></div>
<div class="t r" style="right:1413px;top:576.00px;font-size:13px;font-weight:normal;color:#303030;">0</div>
<div class="t r" style="right:1327px;top:576.00px;font-size:13px;font-weight:normal;color:#2357b5;">0</div>
<div class="t r" style="right:1272px;top:576.00px;font-size:13px;font-weight:normal;color:#303030;">191</div>
<div class="t r" style="right:1228px;top:577.20px;font-size:11px;font-weight:normal;color:#8a8a8a;">0.3%</div>
<div class="t r" style="right:1087px;top:576.00px;font-size:13px;font-weight:normal;color:#303030;">$67</div>
<div class="t r" style="right:915.5px;top:576.00px;font-size:13px;font-weight:normal;color:#2357b5;">34</div>
<div class="t r" style="right:763px;top:576.00px;font-size:13px;font-weight:normal;color:#2357b5;">1</div>
<div class="t r" style="right:661px;top:576.00px;font-size:13px;font-weight:normal;color:#303030;">116</div>
<div class="t r" style="right:617px;top:577.20px;font-size:11px;font-weight:normal;color:#8a8a8a;">7.2%</div>
<div class="t r" style="right:482px;top:576.00px;font-size:13px;font-weight:normal;color:#303030;">$77</div>
<div class="t r" style="right:330px;top:576.00px;font-size:13px;font-weight:normal;color:#2357b5;">13</div>
<div class="t r" style="right:197px;top:576.00px;font-size:13px;font-weight:normal;color:#2357b5;">1</div>
<div class="b" style="left:835px;top:580.05px;width:1px;height:5.5px;background:#3287d6;"></div>
<div class="b" style="left:836px;top:580.05px;width:1px;height:5.5px;background:#8fd1a7;"></div>
<div class="b" style="left:975px;top:580.05px;width:1px;height:5.5px;background:#3287d6;"></div>
<div class="b" style="left:976px;top:580.05px;width:1px;height:5.5px;background:#8fd1a7;"></div>
<div class="b" style="left:1147px;top:580.05px;width:1px;height:5.5px;background:#3287d6;"></div>
<div class="b" style="left:1148px;top:580.05px;width:1px;height:5.5px;background:#f59a99;"></div>
<div class="b" style="left:1299px;top:580.05px;width:1px;height:5.5px;background:#3287d6;"></div>
<div class="b" style="left:1300px;top:580.05px;width:1px;height:5.5px;background:#f59a99;"></div>
<div class="b" style="left:1445px;top:580.05px;width:3px;height:5.5px;background:#8fd1a7;"></div>
<div class="b" style="left:1580px;top:580.05px;width:1px;height:5.5px;background:#8fd1a7;"></div>
<div class="b" style="left:1732px;top:580.05px;width:2px;height:5.5px;background:#8fd1a7;"></div>
<div class="b" style="left:1864px;top:580.05px;width:1px;height:5.5px;background:#8fd1a7;"></div>
<div class="b" style="left:17px;top:597px;width:2031px;height:1px;background:#ebecee;"></div>
<svg class="b" style="left:60px;top:606.8000000000001px" width="10.5" height="12" viewBox="0 0 10.5 12"><path d="M0.6 0 H6.8 L10.5 3.7 V11.4 Q10.5 12 9.9 12 H0.6 Q0 12 0 11.4 V0.6 Q0 0 0.6 0 Z" fill="#d9d9d9"/><path d="M6.8 0 L10.5 3.7 H6.8 Z" fill="#ababab"/></svg>
<div class="t" style="left:79px;top:607.00px;font-size:13px;color:#303030">furnace-installation<span style="display:inline-block;width:4px"></span><svg style="vertical-align:1px" width="7" height="4.5" viewBox="0 0 7 4.5"><path d="M0 0 L7 0 L3.5 4.5 Z" fill="#2b2b2b"/></svg></div>
<div class="t r" style="right:1413px;top:607.00px;font-size:13px;font-weight:normal;color:#303030;">1</div>
<div class="t r" style="right:1327px;top:607.00px;font-size:13px;font-weight:normal;color:#2357b5;">1</div>
<div class="t r" style="right:1272px;top:607.00px;font-size:13px;font-weight:normal;color:#303030;">191</div>
<div class="t r" style="right:1228px;top:608.20px;font-size:11px;font-weight:normal;color:#8a8a8a;">0.3%</div>
<div class="t r" style="right:1087px;top:607.00px;font-size:13px;font-weight:normal;color:#303030;">$133</div>
<div class="t r" style="right:915.5px;top:607.00px;font-size:13px;font-weight:normal;color:#2357b5;">25</div>
<div class="t r" style="right:763px;top:607.00px;font-size:13px;font-weight:normal;color:#2357b5;">1</div>
<div class="t r" style="right:661px;top:607.00px;font-size:13px;font-weight:normal;color:#303030;">42</div>
<div class="t r" style="right:617px;top:608.20px;font-size:11px;font-weight:normal;color:#8a8a8a;">2.6%</div>
<div class="t r" style="right:482px;top:607.00px;font-size:13px;font-weight:normal;color:#303030;">$52</div>
<div class="t r" style="right:330px;top:607.00px;font-size:13px;font-weight:normal;color:#2357b5;">14</div>
<div class="t r" style="right:197px;top:607.00px;font-size:13px;font-weight:normal;color:#2357b5;">2</div>
<div class="b" style="left:835px;top:611.1500000000001px;width:1px;height:5.5px;background:#3287d6;"></div>
<div class="b" style="left:836px;top:611.1500000000001px;width:1px;height:5.5px;background:#8fd1a7;"></div>
<div class="b" style="left:975px;top:611.1500000000001px;width:1px;height:5.5px;background:#3287d6;"></div>
<div class="b" style="left:976px;top:611.1500000000001px;width:1px;height:5.5px;background:#8fd1a7;"></div>
<div class="b" style="left:1147px;top:611.1500000000001px;width:1px;height:5.5px;background:#3287d6;"></div>
<div class="b" style="left:1148px;top:611.1500000000001px;width:1px;height:5.5px;background:#f59a99;"></div>
<div class="b" style="left:1299px;top:611.1500000000001px;width:1px;height:5.5px;background:#3287d6;"></div>
<div class="b" style="left:1300px;top:611.1500000000001px;width:1px;height:5.5px;background:#f59a99;"></div>
<div class="b" style="left:1445px;top:611.1500000000001px;width:2px;height:5.5px;background:#8fd1a7;"></div>
<div class="b" style="left:1580px;top:611.1500000000001px;width:1px;height:5.5px;background:#8fd1a7;"></div>
<div class="b" style="left:1732px;top:611.1500000000001px;width:2px;height:5.5px;background:#8fd1a7;"></div>
<div class="b" style="left:1864px;top:611.1500000000001px;width:1px;height:5.5px;background:#8fd1a7;"></div>
<div class="b" style="left:17px;top:628px;width:2031px;height:1px;background:#ebecee;"></div>
<svg class="b" style="left:60px;top:637.9px" width="10.5" height="12" viewBox="0 0 10.5 12"><path d="M0.6 0 H6.8 L10.5 3.7 V11.4 Q10.5 12 9.9 12 H0.6 Q0 12 0 11.4 V0.6 Q0 0 0.6 0 Z" fill="#d9d9d9"/><path d="M6.8 0 L10.5 3.7 H6.8 Z" fill="#ababab"/></svg>
<div class="t" style="left:79px;top:638.00px;font-size:13px;color:#303030">roof-inspection<span style="display:inline-block;width:4px"></span><svg style="vertical-align:1px" width="7" height="4.5" viewBox="0 0 7 4.5"><path d="M0 0 L7 0 L3.5 4.5 Z" fill="#2b2b2b"/></svg></div>
<div class="t r" style="right:1413px;top:638.00px;font-size:13px;font-weight:normal;color:#303030;">2</div>
<div class="t r" style="right:1327px;top:638.00px;font-size:13px;font-weight:normal;color:#2357b5;">2</div>
<div class="t r" style="right:1272px;top:638.00px;font-size:13px;font-weight:normal;color:#303030;">173</div>
<div class="t r" style="right:1228px;top:639.20px;font-size:11px;font-weight:normal;color:#8a8a8a;">0.3%</div>
<div class="t r" style="right:1087px;top:638.00px;font-size:13px;font-weight:normal;color:#303030;">$298</div>
<div class="t r" style="right:915.5px;top:638.00px;font-size:13px;font-weight:normal;color:#2357b5;">12</div>
<div class="t r" style="right:763px;top:638.00px;font-size:13px;font-weight:normal;color:#2357b5;">1</div>
<div class="t r" style="right:661px;top:638.00px;font-size:13px;font-weight:normal;color:#303030;">0</div>
<div class="t r" style="right:482px;top:638.00px;font-size:13px;font-weight:normal;color:#303030;">$0</div>
<div class="t r" style="right:330px;top:638.00px;font-size:13px;font-weight:normal;color:#2357b5;">0</div>
<div class="t r" style="right:197px;top:638.00px;font-size:13px;font-weight:normal;color:#2357b5;">0</div>
<div class="b" style="left:835px;top:642.25px;width:1px;height:5.5px;background:#3287d6;"></div>
<div class="b" style="left:836px;top:642.25px;width:1px;height:5.5px;background:#f59a99;"></div>
<div class="b" style="left:975px;top:642.25px;width:1px;height:5.5px;background:#3287d6;"></div>
<div class="b" style="left:976px;top:642.25px;width:1px;height:5.5px;background:#f59a99;"></div>
<div class="b" style="left:1147px;top:642.25px;width:1px;height:5.5px;background:#3287d6;"></div>
<div class="b" style="left:1148px;top:642.25px;width:1px;height:5.5px;background:#f59a99;"></div>
<div class="b" style="left:1299px;top:642.25px;width:1px;height:5.5px;background:#3287d6;"></div>
<div class="b" style="left:1300px;top:642.25px;width:1px;height:5.5px;background:#f59a99;"></div>
<div class="b" style="left:17px;top:659px;width:2031px;height:1px;background:#ebecee;"></div>
<svg class="b" style="left:60px;top:669.0px" width="10.5" height="12" viewBox="0 0 10.5 12"><path d="M0.6 0 H6.8 L10.5 3.7 V11.4 Q10.5 12 9.9 12 H0.6 Q0 12 0 11.4 V0.6 Q0 0 0.6 0 Z" fill="#d9d9d9"/><path d="M6.8 0 L10.5 3.7 H6.8 Z" fill="#ababab"/></svg>
<div class="t" style="left:79px;top:669.00px;font-size:13px;color:#303030">soffit-fascia-repair<span style="display:inline-block;width:4px"></span><svg style="vertical-align:1px" width="7" height="4.5" viewBox="0 0 7 4.5"><path d="M0 0 L7 0 L3.5 4.5 Z" fill="#2b2b2b"/></svg></div>
<div class="t r" style="right:1413px;top:669.00px;font-size:13px;font-weight:normal;color:#303030;">0</div>
<div class="t r" style="right:1327px;top:669.00px;font-size:13px;font-weight:normal;color:#2357b5;">0</div>
<div class="t r" style="right:1272px;top:669.00px;font-size:13px;font-weight:normal;color:#303030;">159</div>
<div class="t r" style="right:1228px;top:670.20px;font-size:11px;font-weight:normal;color:#8a8a8a;">0.3%</div>
<div class="t r" style="right:1087px;top:669.00px;font-size:13px;font-weight:normal;color:#303030;">$399</div>
<div class="t r" style="right:915.5px;top:669.00px;font-size:13px;font-weight:normal;color:#2357b5;">18</div>
<div class="t r" style="right:763px;top:669.00px;font-size:13px;font-weight:normal;color:#2357b5;">1</div>
<div class="t r" style="right:661px;top:669.00px;font-size:13px;font-weight:normal;color:#303030;">0</div>
<div class="t r" style="right:482px;top:669.00px;font-size:13px;font-weight:normal;color:#303030;">$0</div>
<div class="t r" style="right:330px;top:669.00px;font-size:13px;font-weight:normal;color:#2357b5;">0</div>
<div class="t r" style="right:197px;top:669.00px;font-size:13px;font-weight:normal;color:#2357b5;">0</div>
<div class="b" style="left:835px;top:673.35px;width:1px;height:5.5px;background:#3287d6;"></div>
<div class="b" style="left:836px;top:673.35px;width:1px;height:5.5px;background:#f59a99;"></div>
<div class="b" style="left:975px;top:673.35px;width:1px;height:5.5px;background:#3287d6;"></div>
<div class="b" style="left:976px;top:673.35px;width:1px;height:5.5px;background:#f59a99;"></div>
<div class="b" style="left:1147px;top:673.35px;width:1px;height:5.5px;background:#3287d6;"></div>
<div class="b" style="left:1148px;top:673.35px;width:1px;height:5.5px;background:#f59a99;"></div>
<div class="b" style="left:1299px;top:673.35px;width:1px;height:5.5px;background:#3287d6;"></div>
<div class="b" style="left:1300px;top:673.35px;width:1px;height:5.5px;background:#f59a99;"></div>
<div class="b" style="left:17px;top:690px;width:2031px;height:1px;background:#ebecee;"></div>
<svg class="b" style="left:60px;top:700.1px" width="10.5" height="12" viewBox="0 0 10.5 12"><path d="M0.6 0 H6.8 L10.5 3.7 V11.4 Q10.5 12 9.9 12 H0.6 Q0 12 0 11.4 V0.6 Q0 0 0.6 0 Z" fill="#d9d9d9"/><path d="M6.8 0 L10.5 3.7 H6.8 Z" fill="#ababab"/></svg>
<div class="t" style="left:79px;top:701.00px;font-size:13px;color:#303030">air-conditioning-installation<span style="display:inline-block;width:4px"></span><svg style="vertical-align:1px" width="7" height="4.5" viewBox="0 0 7 4.5"><path d="M0 0 L7 0 L3.5 4.5 Z" fill="#2b2b2b"/></svg></div>
<div class="t r" style="right:1413px;top:701.00px;font-size:13px;font-weight:normal;color:#303030;">1</div>
<div class="t r" style="right:1327px;top:701.00px;font-size:13px;font-weight:normal;color:#2357b5;">1</div>
<div class="t r" style="right:1272px;top:701.00px;font-size:13px;font-weight:normal;color:#303030;">152</div>
<div class="t r" style="right:1228px;top:702.20px;font-size:11px;font-weight:normal;color:#8a8a8a;">0.3%</div>
<div class="t r" style="right:1087px;top:701.00px;font-size:13px;font-weight:normal;color:#303030;">$614</div>
<div class="t r" style="right:915.5px;top:701.00px;font-size:13px;font-weight:normal;color:#2357b5;">53</div>
<div class="t r" style="right:763px;top:701.00px;font-size:13px;font-weight:normal;color:#2357b5;">1</div>
<div class="t r" style="right:661px;top:701.00px;font-size:13px;font-weight:normal;color:#303030;">43</div>
<div class="t r" style="right:617px;top:702.20px;font-size:11px;font-weight:normal;color:#8a8a8a;">2.7%</div>
<div class="t r" style="right:482px;top:701.00px;font-size:13px;font-weight:normal;color:#303030;">$57</div>
<div class="t r" style="right:330px;top:701.00px;font-size:13px;font-weight:normal;color:#2357b5;">16</div>
<div class="t r" style="right:197px;top:701.00px;font-size:13px;font-weight:normal;color:#2357b5;">3</div>
<div class="b" style="left:835px;top:704.45px;width:1px;height:5.5px;background:#3287d6;"></div>
<div class="b" style="left:836px;top:704.45px;width:1px;height:5.5px;background:#8fd1a7;"></div>
<div class="b" style="left:975px;top:704.45px;width:1px;height:5.5px;background:#3287d6;"></div>
<div class="b" style="left:976px;top:704.45px;width:1px;height:5.5px;background:#8fd1a7;"></div>
<div class="b" style="left:1147px;top:704.45px;width:1px;height:5.5px;background:#3287d6;"></div>
<div class="b" style="left:1148px;top:704.45px;width:1px;height:5.5px;background:#f59a99;"></div>
<div class="b" style="left:1299px;top:704.45px;width:1px;height:5.5px;background:#3287d6;"></div>
<div class="b" style="left:1300px;top:704.45px;width:1px;height:5.5px;background:#f59a99;"></div>
<div class="b" style="left:1445px;top:704.45px;width:2px;height:5.5px;background:#8fd1a7;"></div>
<div class="b" style="left:1580px;top:704.45px;width:1.5px;height:5.5px;background:#3287d6;"></div>
<div class="b" style="left:1732px;top:704.45px;width:1px;height:5.5px;background:#3287d6;"></div>
<div class="b" style="left:1733px;top:704.45px;width:2.5px;height:5.5px;background:#8fd1a7;"></div>
<div class="b" style="left:1864px;top:704.45px;width:1.5px;height:5.5px;background:#3287d6;"></div>
<div class="b" style="left:17px;top:721px;width:2031px;height:1px;background:#ebecee;"></div>
<svg class="b" style="left:60px;top:731.1999999999999px" width="10.5" height="12" viewBox="0 0 10.5 12"><path d="M0.6 0 H6.8 L10.5 3.7 V11.4 Q10.5 12 9.9 12 H0.6 Q0 12 0 11.4 V0.6 Q0 0 0.6 0 Z" fill="#d9d9d9"/><path d="M6.8 0 L10.5 3.7 H6.8 Z" fill="#ababab"/></svg>
<div class="t" style="left:79px;top:732.00px;font-size:13px;color:#303030">electrical-repair-installation<span style="display:inline-block;width:4px"></span><svg style="vertical-align:1px" width="7" height="4.5" viewBox="0 0 7 4.5"><path d="M0 0 L7 0 L3.5 4.5 Z" fill="#2b2b2b"/></svg></div>
<div class="t r" style="right:1413px;top:732.00px;font-size:13px;font-weight:normal;color:#303030;">0</div>
<div class="t r" style="right:1327px;top:732.00px;font-size:13px;font-weight:normal;color:#2357b5;">0</div>
<div class="t r" style="right:1272px;top:732.00px;font-size:13px;font-weight:normal;color:#303030;">129</div>
<div class="t r" style="right:1228px;top:733.20px;font-size:11px;font-weight:normal;color:#8a8a8a;">0.2%</div>
<div class="t r" style="right:1087px;top:732.00px;font-size:13px;font-weight:normal;color:#303030;">$58</div>
<div class="t r" style="right:915.5px;top:732.00px;font-size:13px;font-weight:normal;color:#2357b5;">5</div>
<div class="t r" style="right:763px;top:732.00px;font-size:13px;font-weight:normal;color:#2357b5;">1</div>
<div class="t r" style="right:661px;top:732.00px;font-size:13px;font-weight:normal;color:#303030;">6</div>
<div class="t r" style="right:617px;top:733.20px;font-size:11px;font-weight:normal;color:#8a8a8a;">0.4%</div>
<div class="t r" style="right:482px;top:732.00px;font-size:13px;font-weight:normal;color:#303030;">$0.63</div>
<div class="t r" style="right:330px;top:732.00px;font-size:13px;font-weight:normal;color:#2357b5;">4</div>
<div class="t r" style="right:197px;top:732.00px;font-size:13px;font-weight:normal;color:#2357b5;">1</div>
<div class="b" style="left:835px;top:735.55px;width:1px;height:5.5px;background:#3287d6;"></div>
<div class="b" style="left:836px;top:735.55px;width:1px;height:5.5px;background:#8fd1a7;"></div>
<div class="b" style="left:975px;top:735.55px;width:1px;height:5.5px;background:#3287d6;"></div>
<div class="b" style="left:976px;top:735.55px;width:1px;height:5.5px;background:#8fd1a7;"></div>
<div class="b" style="left:1147px;top:735.55px;width:1px;height:5.5px;background:#3287d6;"></div>
<div class="b" style="left:1148px;top:735.55px;width:1px;height:5.5px;background:#f59a99;"></div>
<div class="b" style="left:1299px;top:735.55px;width:1px;height:5.5px;background:#3287d6;"></div>
<div class="b" style="left:1300px;top:735.55px;width:1px;height:5.5px;background:#f59a99;"></div>
<div class="b" style="left:1445px;top:735.55px;width:1px;height:5.5px;background:#8fd1a7;"></div>
<div class="b" style="left:1580px;top:735.55px;width:1px;height:5.5px;background:#8fd1a7;"></div>
<div class="b" style="left:1732px;top:735.55px;width:1px;height:5.5px;background:#8fd1a7;"></div>
<div class="b" style="left:1864px;top:735.55px;width:1px;height:5.5px;background:#8fd1a7;"></div>
<div class="b" style="left:17px;top:752px;width:2031px;height:1px;background:#ebecee;"></div>
<svg class="b" style="left:60px;top:762.3000000000001px" width="10.5" height="12" viewBox="0 0 10.5 12"><path d="M0.6 0 H6.8 L10.5 3.7 V11.4 Q10.5 12 9.9 12 H0.6 Q0 12 0 11.4 V0.6 Q0 0 0.6 0 Z" fill="#d9d9d9"/><path d="M6.8 0 L10.5 3.7 H6.8 Z" fill="#ababab"/></svg>
<div class="t" style="left:79px;top:763.00px;font-size:13px;color:#303030">retractable-screen-doors<span style="display:inline-block;width:4px"></span><svg style="vertical-align:1px" width="7" height="4.5" viewBox="0 0 7 4.5"><path d="M0 0 L7 0 L3.5 4.5 Z" fill="#2b2b2b"/></svg></div>
<div class="t r" style="right:1413px;top:763.00px;font-size:13px;font-weight:normal;color:#303030;">0</div>
<div class="t r" style="right:1327px;top:763.00px;font-size:13px;font-weight:normal;color:#2357b5;">0</div>
<div class="t r" style="right:1272px;top:763.00px;font-size:13px;font-weight:normal;color:#303030;">122</div>
<div class="t r" style="right:1228px;top:764.20px;font-size:11px;font-weight:normal;color:#8a8a8a;">0.2%</div>
<div class="t r" style="right:1087px;top:763.00px;font-size:13px;font-weight:normal;color:#303030;">$56</div>
<div class="t r" style="right:915.5px;top:763.00px;font-size:13px;font-weight:normal;color:#2357b5;">7</div>
<div class="t r" style="right:763px;top:763.00px;font-size:13px;font-weight:normal;color:#2357b5;">1</div>
<div class="t r" style="right:661px;top:763.00px;font-size:13px;font-weight:normal;color:#303030;">0</div>
<div class="t r" style="right:482px;top:763.00px;font-size:13px;font-weight:normal;color:#303030;">$0</div>
<div class="t r" style="right:330px;top:763.00px;font-size:13px;font-weight:normal;color:#2357b5;">0</div>
<div class="t r" style="right:197px;top:763.00px;font-size:13px;font-weight:normal;color:#2357b5;">0</div>
<div class="b" style="left:835px;top:766.6500000000001px;width:1px;height:5.5px;background:#3287d6;"></div>
<div class="b" style="left:836px;top:766.6500000000001px;width:1px;height:5.5px;background:#f59a99;"></div>
<div class="b" style="left:975px;top:766.6500000000001px;width:1px;height:5.5px;background:#3287d6;"></div>
<div class="b" style="left:976px;top:766.6500000000001px;width:1px;height:5.5px;background:#f59a99;"></div>
<div class="b" style="left:1147px;top:766.6500000000001px;width:1px;height:5.5px;background:#3287d6;"></div>
<div class="b" style="left:1148px;top:766.6500000000001px;width:1px;height:5.5px;background:#f59a99;"></div>
<div class="b" style="left:1299px;top:766.6500000000001px;width:1px;height:5.5px;background:#3287d6;"></div>
<div class="b" style="left:1300px;top:766.6500000000001px;width:1px;height:5.5px;background:#f59a99;"></div>
<div class="b" style="left:17px;top:784px;width:2031px;height:1px;background:#ebecee;"></div>
<svg class="b" style="left:60px;top:793.4px" width="10.5" height="12" viewBox="0 0 10.5 12"><path d="M0.6 0 H6.8 L10.5 3.7 V11.4 Q10.5 12 9.9 12 H0.6 Q0 12 0 11.4 V0.6 Q0 0 0.6 0 Z" fill="#d9d9d9"/><path d="M6.8 0 L10.5 3.7 H6.8 Z" fill="#ababab"/></svg>
<div class="t" style="left:79px;top:794.00px;font-size:13px;color:#303030">home-energy-audit<span style="display:inline-block;width:4px"></span><svg style="vertical-align:1px" width="7" height="4.5" viewBox="0 0 7 4.5"><path d="M0 0 L7 0 L3.5 4.5 Z" fill="#2b2b2b"/></svg></div>
<div class="t r" style="right:1413px;top:794.00px;font-size:13px;font-weight:normal;color:#303030;">1</div>
<div class="t r" style="right:1327px;top:794.00px;font-size:13px;font-weight:normal;color:#2357b5;">1</div>
<div class="t r" style="right:1272px;top:794.00px;font-size:13px;font-weight:normal;color:#303030;">117</div>
<div class="t r" style="right:1228px;top:795.20px;font-size:11px;font-weight:normal;color:#8a8a8a;">0.2%</div>
<div class="t r" style="right:1087px;top:794.00px;font-size:13px;font-weight:normal;color:#303030;">$111</div>
<div class="t r" style="right:915.5px;top:794.00px;font-size:13px;font-weight:normal;color:#2357b5;">18</div>
<div class="t r" style="right:763px;top:794.00px;font-size:13px;font-weight:normal;color:#2357b5;">1</div>
<div class="t r" style="right:661px;top:794.00px;font-size:13px;font-weight:normal;color:#303030;">0</div>
<div class="t r" style="right:482px;top:794.00px;font-size:13px;font-weight:normal;color:#303030;">$2.0</div>
<div class="t r" style="right:330px;top:794.00px;font-size:13px;font-weight:normal;color:#2357b5;">1</div>
<div class="t r" style="right:197px;top:794.00px;font-size:13px;font-weight:normal;color:#2357b5;">1</div>
<div class="b" style="left:835px;top:797.75px;width:1px;height:5.5px;background:#3287d6;"></div>
<div class="b" style="left:836px;top:797.75px;width:1px;height:5.5px;background:#8fd1a7;"></div>
<div class="b" style="left:975px;top:797.75px;width:1px;height:5.5px;background:#3287d6;"></div>
<div class="b" style="left:976px;top:797.75px;width:1px;height:5.5px;background:#f59a99;"></div>
<div class="b" style="left:1147px;top:797.75px;width:1px;height:5.5px;background:#3287d6;"></div>
<div class="b" style="left:1148px;top:797.75px;width:1px;height:5.5px;background:#f59a99;"></div>
<div class="b" style="left:1299px;top:797.75px;width:1px;height:5.5px;background:#3287d6;"></div>
<div class="b" style="left:1300px;top:797.75px;width:1px;height:5.5px;background:#f59a99;"></div>
<div class="b" style="left:1580px;top:797.75px;width:1px;height:5.5px;background:#8fd1a7;"></div>
<div class="b" style="left:1732px;top:797.75px;width:1px;height:5.5px;background:#8fd1a7;"></div>
<div class="b" style="left:1864px;top:797.75px;width:1px;height:5.5px;background:#8fd1a7;"></div>
<div class="b" style="left:17px;top:815px;width:2031px;height:1px;background:#ebecee;"></div>
<svg class="b" style="left:60px;top:824.5px" width="10.5" height="12" viewBox="0 0 10.5 12"><path d="M0.6 0 H6.8 L10.5 3.7 V11.4 Q10.5 12 9.9 12 H0.6 Q0 12 0 11.4 V0.6 Q0 0 0.6 0 Z" fill="#d9d9d9"/><path d="M6.8 0 L10.5 3.7 H6.8 Z" fill="#ababab"/></svg>
<div class="t" style="left:79px;top:825.00px;font-size:13px;color:#303030">siding-repair<span style="display:inline-block;width:4px"></span><svg style="vertical-align:1px" width="7" height="4.5" viewBox="0 0 7 4.5"><path d="M0 0 L7 0 L3.5 4.5 Z" fill="#2b2b2b"/></svg></div>
<div class="t r" style="right:1413px;top:825.00px;font-size:13px;font-weight:normal;color:#303030;">0</div>
<div class="t r" style="right:1327px;top:825.00px;font-size:13px;font-weight:normal;color:#2357b5;">0</div>
<div class="t r" style="right:1272px;top:825.00px;font-size:13px;font-weight:normal;color:#303030;">102</div>
<div class="t r" style="right:1228px;top:826.20px;font-size:11px;font-weight:normal;color:#8a8a8a;">0.2%</div>
<div class="t r" style="right:1087px;top:825.00px;font-size:13px;font-weight:normal;color:#303030;">$302</div>
<div class="t r" style="right:915.5px;top:825.00px;font-size:13px;font-weight:normal;color:#2357b5;">7</div>
<div class="t r" style="right:763px;top:825.00px;font-size:13px;font-weight:normal;color:#2357b5;">1</div>
<div class="t r" style="right:661px;top:825.00px;font-size:13px;font-weight:normal;color:#303030;">1</div>
<div class="t r" style="right:617px;top:826.20px;font-size:11px;font-weight:normal;color:#8a8a8a;">&lt;0.1%</div>
<div class="t r" style="right:482px;top:825.00px;font-size:13px;font-weight:normal;color:#303030;">$1.4</div>
<div class="t r" style="right:330px;top:825.00px;font-size:13px;font-weight:normal;color:#2357b5;">1</div>
<div class="t r" style="right:197px;top:825.00px;font-size:13px;font-weight:normal;color:#2357b5;">1</div>
<div class="b" style="left:835px;top:828.85px;width:1px;height:5.5px;background:#3287d6;"></div>
<div class="b" style="left:836px;top:828.85px;width:1px;height:5.5px;background:#f59a99;"></div>
<div class="b" style="left:975px;top:828.85px;width:1px;height:5.5px;background:#3287d6;"></div>
<div class="b" style="left:976px;top:828.85px;width:1px;height:5.5px;background:#f59a99;"></div>
<div class="b" style="left:1147px;top:828.85px;width:1px;height:5.5px;background:#3287d6;"></div>
<div class="b" style="left:1148px;top:828.85px;width:1px;height:5.5px;background:#f59a99;"></div>
<div class="b" style="left:1299px;top:828.85px;width:1px;height:5.5px;background:#3287d6;"></div>
<div class="b" style="left:1300px;top:828.85px;width:1px;height:5.5px;background:#f59a99;"></div>
<div class="b" style="left:1445px;top:828.85px;width:1px;height:5.5px;background:#8fd1a7;"></div>
<div class="b" style="left:1580px;top:828.85px;width:1px;height:5.5px;background:#8fd1a7;"></div>
<div class="b" style="left:1732px;top:828.85px;width:1px;height:5.5px;background:#8fd1a7;"></div>
<div class="b" style="left:1864px;top:828.85px;width:1px;height:5.5px;background:#8fd1a7;"></div>
<div class="b" style="left:17px;top:846px;width:2031px;height:1px;background:#ebecee;"></div>
<svg class="b" style="left:60px;top:855.6px" width="10.5" height="12" viewBox="0 0 10.5 12"><path d="M0.6 0 H6.8 L10.5 3.7 V11.4 Q10.5 12 9.9 12 H0.6 Q0 12 0 11.4 V0.6 Q0 0 0.6 0 Z" fill="#d9d9d9"/><path d="M6.8 0 L10.5 3.7 H6.8 Z" fill="#ababab"/></svg>
<div class="t" style="left:79px;top:856.00px;font-size:13px;color:#303030">ev-charger-installation<span style="display:inline-block;width:4px"></span><svg style="vertical-align:1px" width="7" height="4.5" viewBox="0 0 7 4.5"><path d="M0 0 L7 0 L3.5 4.5 Z" fill="#2b2b2b"/></svg></div>
<div class="t r" style="right:1413px;top:856.00px;font-size:13px;font-weight:normal;color:#303030;">4</div>
<div class="t r" style="right:1327px;top:856.00px;font-size:13px;font-weight:normal;color:#2357b5;">1</div>
<div class="t r" style="right:1272px;top:856.00px;font-size:13px;font-weight:normal;color:#303030;">83</div>
<div class="t r" style="right:1228px;top:857.20px;font-size:11px;font-weight:normal;color:#8a8a8a;">0.1%</div>
<div class="t r" style="right:1087px;top:856.00px;font-size:13px;font-weight:normal;color:#303030;">$466</div>
<div class="t r" style="right:915.5px;top:856.00px;font-size:13px;font-weight:normal;color:#2357b5;">12</div>
<div class="t r" style="right:763px;top:856.00px;font-size:13px;font-weight:normal;color:#2357b5;">1</div>
<div class="t r" style="right:661px;top:856.00px;font-size:13px;font-weight:normal;color:#303030;">0</div>
<div class="t r" style="right:482px;top:856.00px;font-size:13px;font-weight:normal;color:#303030;">$0</div>
<div class="t r" style="right:330px;top:856.00px;font-size:13px;font-weight:normal;color:#2357b5;">0</div>
<div class="t r" style="right:197px;top:856.00px;font-size:13px;font-weight:normal;color:#2357b5;">0</div>
<div class="b" style="left:835px;top:859.95px;width:1px;height:5.5px;background:#3287d6;"></div>
<div class="b" style="left:836px;top:859.95px;width:1px;height:5.5px;background:#8fd1a7;"></div>
<div class="b" style="left:975px;top:859.95px;width:1px;height:5.5px;background:#3287d6;"></div>
<div class="b" style="left:976px;top:859.95px;width:1px;height:5.5px;background:#8fd1a7;"></div>
<div class="b" style="left:1147px;top:859.95px;width:1px;height:5.5px;background:#3287d6;"></div>
<div class="b" style="left:1148px;top:859.95px;width:1px;height:5.5px;background:#f59a99;"></div>
<div class="b" style="left:1299px;top:859.95px;width:1px;height:5.5px;background:#3287d6;"></div>
<div class="b" style="left:1300px;top:859.95px;width:1px;height:5.5px;background:#f59a99;"></div>
<div class="b" style="left:17px;top:877px;width:2031px;height:1px;background:#ebecee;"></div>
<svg class="b" style="left:60px;top:886.7px" width="10.5" height="12" viewBox="0 0 10.5 12"><path d="M0.6 0 H6.8 L10.5 3.7 V11.4 Q10.5 12 9.9 12 H0.6 Q0 12 0 11.4 V0.6 Q0 0 0.6 0 Z" fill="#d9d9d9"/><path d="M6.8 0 L10.5 3.7 H6.8 Z" fill="#ababab"/></svg>
<div class="t" style="left:79px;top:887.00px;font-size:13px;color:#303030">poly-b-replacement<span style="display:inline-block;width:4px"></span><svg style="vertical-align:1px" width="7" height="4.5" viewBox="0 0 7 4.5"><path d="M0 0 L7 0 L3.5 4.5 Z" fill="#2b2b2b"/></svg></div>
<div class="t r" style="right:1413px;top:887.00px;font-size:13px;font-weight:normal;color:#303030;">0</div>
<div class="t r" style="right:1327px;top:887.00px;font-size:13px;font-weight:normal;color:#2357b5;">0</div>
<div class="t r" style="right:1272px;top:887.00px;font-size:13px;font-weight:normal;color:#303030;">83</div>
<div class="t r" style="right:1228px;top:888.20px;font-size:11px;font-weight:normal;color:#8a8a8a;">0.1%</div>
<div class="t r" style="right:1087px;top:887.00px;font-size:13px;font-weight:normal;color:#303030;">$243</div>
<div class="t r" style="right:915.5px;top:887.00px;font-size:13px;font-weight:normal;color:#2357b5;">29</div>
<div class="t r" style="right:763px;top:887.00px;font-size:13px;font-weight:normal;color:#2357b5;">1</div>
<div class="t r" style="right:661px;top:887.00px;font-size:13px;font-weight:normal;color:#303030;">0</div>
<div class="t r" style="right:482px;top:887.00px;font-size:13px;font-weight:normal;color:#303030;">$0</div>
<div class="t r" style="right:330px;top:887.00px;font-size:13px;font-weight:normal;color:#2357b5;">0</div>
<div class="t r" style="right:197px;top:887.00px;font-size:13px;font-weight:normal;color:#2357b5;">0</div>
<div class="b" style="left:835px;top:891.0500000000001px;width:1px;height:5.5px;background:#3287d6;"></div>
<div class="b" style="left:836px;top:891.0500000000001px;width:1px;height:5.5px;background:#8fd1a7;"></div>
<div class="b" style="left:975px;top:891.0500000000001px;width:1px;height:5.5px;background:#3287d6;"></div>
<div class="b" style="left:976px;top:891.0500000000001px;width:1px;height:5.5px;background:#8fd1a7;"></div>
<div class="b" style="left:1147px;top:891.0500000000001px;width:1px;height:5.5px;background:#3287d6;"></div>
<div class="b" style="left:1148px;top:891.0500000000001px;width:1px;height:5.5px;background:#f59a99;"></div>
<div class="b" style="left:1299px;top:891.0500000000001px;width:1px;height:5.5px;background:#3287d6;"></div>
<div class="b" style="left:1300px;top:891.0500000000001px;width:1px;height:5.5px;background:#f59a99;"></div>
<div class="b" style="left:17px;top:908px;width:2031px;height:1px;background:#ebecee;"></div>
<svg class="b" style="left:60px;top:917.8px" width="10.5" height="12" viewBox="0 0 10.5 12"><path d="M0.6 0 H6.8 L10.5 3.7 V11.4 Q10.5 12 9.9 12 H0.6 Q0 12 0 11.4 V0.6 Q0 0 0.6 0 Z" fill="#d9d9d9"/><path d="M6.8 0 L10.5 3.7 H6.8 Z" fill="#ababab"/></svg>
<div class="t" style="left:79px;top:918.00px;font-size:13px;color:#303030">eavestrough-installation<span style="display:inline-block;width:4px"></span><svg style="vertical-align:1px" width="7" height="4.5" viewBox="0 0 7 4.5"><path d="M0 0 L7 0 L3.5 4.5 Z" fill="#2b2b2b"/></svg></div>
<div class="t r" style="right:1413px;top:918.00px;font-size:13px;font-weight:normal;color:#303030;">0</div>
<div class="t r" style="right:1327px;top:918.00px;font-size:13px;font-weight:normal;color:#2357b5;">0</div>
<div class="t r" style="right:1272px;top:918.00px;font-size:13px;font-weight:normal;color:#303030;">62</div>
<div class="t r" style="right:1228px;top:919.20px;font-size:11px;font-weight:normal;color:#8a8a8a;">0.1%</div>
<div class="t r" style="right:1087px;top:918.00px;font-size:13px;font-weight:normal;color:#303030;">$105</div>
<div class="t r" style="right:915.5px;top:918.00px;font-size:13px;font-weight:normal;color:#2357b5;">25</div>
<div class="t r" style="right:763px;top:918.00px;font-size:13px;font-weight:normal;color:#2357b5;">1</div>
<div class="t r" style="right:661px;top:918.00px;font-size:13px;font-weight:normal;color:#303030;">0</div>
<div class="t r" style="right:482px;top:918.00px;font-size:13px;font-weight:normal;color:#303030;">$0</div>
<div class="t r" style="right:330px;top:918.00px;font-size:13px;font-weight:normal;color:#2357b5;">0</div>
<div class="t r" style="right:197px;top:918.00px;font-size:13px;font-weight:normal;color:#2357b5;">0</div>
<div class="b" style="left:835px;top:922.15px;width:1px;height:5.5px;background:#3287d6;"></div>
<div class="b" style="left:836px;top:922.15px;width:1px;height:5.5px;background:#f59a99;"></div>
<div class="b" style="left:975px;top:922.15px;width:1px;height:5.5px;background:#3287d6;"></div>
<div class="b" style="left:976px;top:922.15px;width:1px;height:5.5px;background:#f59a99;"></div>
<div class="b" style="left:1147px;top:922.15px;width:1px;height:5.5px;background:#3287d6;"></div>
<div class="b" style="left:1148px;top:922.15px;width:1px;height:5.5px;background:#f59a99;"></div>
<div class="b" style="left:1299px;top:922.15px;width:1px;height:5.5px;background:#3287d6;"></div>
<div class="b" style="left:1300px;top:922.15px;width:1px;height:5.5px;background:#f59a99;"></div>
<div class="b" style="left:17px;top:939px;width:2031px;height:1px;background:#ebecee;"></div>
<svg class="b" style="left:60px;top:948.9px" width="10.5" height="12" viewBox="0 0 10.5 12"><path d="M0.6 0 H6.8 L10.5 3.7 V11.4 Q10.5 12 9.9 12 H0.6 Q0 12 0 11.4 V0.6 Q0 0 0.6 0 Z" fill="#d9d9d9"/><path d="M6.8 0 L10.5 3.7 H6.8 Z" fill="#ababab"/></svg>
<div class="t" style="left:79px;top:949.00px;font-size:13px;color:#303030">hot-water-tank-installation<span style="display:inline-block;width:4px"></span><svg style="vertical-align:1px" width="7" height="4.5" viewBox="0 0 7 4.5"><path d="M0 0 L7 0 L3.5 4.5 Z" fill="#2b2b2b"/></svg></div>
<div class="t r" style="right:1413px;top:949.00px;font-size:13px;font-weight:normal;color:#303030;">0</div>
<div class="t r" style="right:1327px;top:949.00px;font-size:13px;font-weight:normal;color:#2357b5;">0</div>
<div class="t r" style="right:1272px;top:949.00px;font-size:13px;font-weight:normal;color:#303030;">51</div>
<div class="t r" style="right:1228px;top:950.20px;font-size:11px;font-weight:normal;color:#8a8a8a;">&lt;0.1%</div>
<div class="t r" style="right:1087px;top:949.00px;font-size:13px;font-weight:normal;color:#303030;">$45</div>
<div class="t r" style="right:915.5px;top:949.00px;font-size:13px;font-weight:normal;color:#2357b5;">14</div>
<div class="t r" style="right:763px;top:949.00px;font-size:13px;font-weight:normal;color:#2357b5;">1</div>
<div class="t r" style="right:661px;top:949.00px;font-size:13px;font-weight:normal;color:#303030;">121</div>
<div class="t r" style="right:617px;top:950.20px;font-size:11px;font-weight:normal;color:#8a8a8a;">7.5%</div>
<div class="t r" style="right:482px;top:949.00px;font-size:13px;font-weight:normal;color:#303030;">$240</div>
<div class="t r" style="right:330px;top:949.00px;font-size:13px;font-weight:normal;color:#2357b5;">9</div>
<div class="t r" style="right:197px;top:949.00px;font-size:13px;font-weight:normal;color:#2357b5;">3</div>
<div class="b" style="left:835px;top:953.25px;width:1px;height:5.5px;background:#3287d6;"></div>
<div class="b" style="left:836px;top:953.25px;width:1px;height:5.5px;background:#8fd1a7;"></div>
<div class="b" style="left:975px;top:953.25px;width:1px;height:5.5px;background:#3287d6;"></div>
<div class="b" style="left:976px;top:953.25px;width:1px;height:5.5px;background:#8fd1a7;"></div>
<div class="b" style="left:1147px;top:953.25px;width:1px;height:5.5px;background:#3287d6;"></div>
<div class="b" style="left:1148px;top:953.25px;width:1px;height:5.5px;background:#f59a99;"></div>
<div class="b" style="left:1299px;top:953.25px;width:1px;height:5.5px;background:#3287d6;"></div>
<div class="b" style="left:1300px;top:953.25px;width:1px;height:5.5px;background:#f59a99;"></div>
<div class="b" style="left:1445px;top:953.25px;width:1px;height:5.5px;background:#3287d6;"></div>
<div class="b" style="left:1446px;top:953.25px;width:2.5px;height:5.5px;background:#8fd1a7;"></div>
<div class="b" style="left:1580px;top:953.25px;width:1px;height:5.5px;background:#3287d6;"></div>
<div class="b" style="left:1581px;top:953.25px;width:2.5px;height:5.5px;background:#8fd1a7;"></div>
<div class="b" style="left:1732px;top:953.25px;width:1px;height:5.5px;background:#3287d6;"></div>
<div class="b" style="left:1733px;top:953.25px;width:1.5px;height:5.5px;background:#8fd1a7;"></div>
<div class="b" style="left:1864px;top:953.25px;width:1.5px;height:5.5px;background:#3287d6;"></div>
<div class="b" style="left:17px;top:970px;width:2031px;height:1px;background:#ebecee;"></div>
<svg class="b" style="left:60px;top:980.0px" width="10.5" height="12" viewBox="0 0 10.5 12"><path d="M0.6 0 H6.8 L10.5 3.7 V11.4 Q10.5 12 9.9 12 H0.6 Q0 12 0 11.4 V0.6 Q0 0 0.6 0 Z" fill="#d9d9d9"/><path d="M6.8 0 L10.5 3.7 H6.8 Z" fill="#ababab"/></svg>
<div class="t" style="left:79px;top:980.00px;font-size:13px;color:#303030">radon-mitigation<span style="display:inline-block;width:4px"></span><svg style="vertical-align:1px" width="7" height="4.5" viewBox="0 0 7 4.5"><path d="M0 0 L7 0 L3.5 4.5 Z" fill="#2b2b2b"/></svg></div>
<div class="t r" style="right:1413px;top:980.00px;font-size:13px;font-weight:normal;color:#303030;">0</div>
<div class="t r" style="right:1327px;top:980.00px;font-size:13px;font-weight:normal;color:#2357b5;">0</div>
<div class="t r" style="right:1272px;top:980.00px;font-size:13px;font-weight:normal;color:#303030;">51</div>
<div class="t r" style="right:1228px;top:981.20px;font-size:11px;font-weight:normal;color:#8a8a8a;">&lt;0.1%</div>
<div class="t r" style="right:1087px;top:980.00px;font-size:13px;font-weight:normal;color:#303030;">$60</div>
<div class="t r" style="right:915.5px;top:980.00px;font-size:13px;font-weight:normal;color:#2357b5;">7</div>
<div class="t r" style="right:763px;top:980.00px;font-size:13px;font-weight:normal;color:#2357b5;">1</div>
<div class="t r" style="right:661px;top:980.00px;font-size:13px;font-weight:normal;color:#303030;">0</div>
<div class="t r" style="right:482px;top:980.00px;font-size:13px;font-weight:normal;color:#303030;">$0</div>
<div class="t r" style="right:330px;top:980.00px;font-size:13px;font-weight:normal;color:#2357b5;">0</div>
<div class="t r" style="right:197px;top:980.00px;font-size:13px;font-weight:normal;color:#2357b5;">0</div>
<div class="b" style="left:835px;top:984.35px;width:1px;height:5.5px;background:#3287d6;"></div>
<div class="b" style="left:836px;top:984.35px;width:1px;height:5.5px;background:#8fd1a7;"></div>
<div class="b" style="left:975px;top:984.35px;width:1px;height:5.5px;background:#3287d6;"></div>
<div class="b" style="left:976px;top:984.35px;width:1px;height:5.5px;background:#8fd1a7;"></div>
<div class="b" style="left:1147px;top:984.35px;width:1px;height:5.5px;background:#3287d6;"></div>
<div class="b" style="left:1148px;top:984.35px;width:1px;height:5.5px;background:#f59a99;"></div>
<div class="b" style="left:1299px;top:984.35px;width:1px;height:5.5px;background:#3287d6;"></div>
<div class="b" style="left:1300px;top:984.35px;width:1px;height:5.5px;background:#f59a99;"></div>
<div class="b" style="left:17px;top:1001px;width:2031px;height:1px;background:#ebecee;"></div>
<svg class="b" style="left:60px;top:1011.1px" width="10.5" height="12" viewBox="0 0 10.5 12"><path d="M0.6 0 H6.8 L10.5 3.7 V11.4 Q10.5 12 9.9 12 H0.6 Q0 12 0 11.4 V0.6 Q0 0 0.6 0 Z" fill="#d9d9d9"/><path d="M6.8 0 L10.5 3.7 H6.8 Z" fill="#ababab"/></svg>
<div class="t" style="left:79px;top:1011.00px;font-size:13px;color:#303030">garage-door-repair-installation<span style="display:inline-block;width:4px"></span><svg style="vertical-align:1px" width="7" height="4.5" viewBox="0 0 7 4.5"><path d="M0 0 L7 0 L3.5 4.5 Z" fill="#2b2b2b"/></svg></div>
<div class="t r" style="right:1413px;top:1011.00px;font-size:13px;font-weight:normal;color:#303030;">1</div>
<div class="t r" style="right:1327px;top:1011.00px;font-size:13px;font-weight:normal;color:#2357b5;">1</div>
<div class="t r" style="right:1272px;top:1011.00px;font-size:13px;font-weight:normal;color:#303030;">41</div>
<div class="t r" style="right:1228px;top:1012.20px;font-size:11px;font-weight:normal;color:#8a8a8a;">&lt;0.1%</div>
<div class="t r" style="right:1087px;top:1011.00px;font-size:13px;font-weight:normal;color:#303030;">$51</div>
<div class="t r" style="right:915.5px;top:1011.00px;font-size:13px;font-weight:normal;color:#2357b5;">22</div>
<div class="t r" style="right:763px;top:1011.00px;font-size:13px;font-weight:normal;color:#2357b5;">1</div>
<div class="t r" style="right:661px;top:1011.00px;font-size:13px;font-weight:normal;color:#303030;">0</div>
<div class="t r" style="right:482px;top:1011.00px;font-size:13px;font-weight:normal;color:#303030;">$0</div>
<div class="t r" style="right:330px;top:1011.00px;font-size:13px;font-weight:normal;color:#2357b5;">0</div>
<div class="t r" style="right:197px;top:1011.00px;font-size:13px;font-weight:normal;color:#2357b5;">0</div>
<div class="b" style="left:835px;top:1015.45px;width:1px;height:5.5px;background:#3287d6;"></div>
<div class="b" style="left:836px;top:1015.45px;width:1px;height:5.5px;background:#8fd1a7;"></div>
<div class="b" style="left:975px;top:1015.45px;width:1px;height:5.5px;background:#3287d6;"></div>
<div class="b" style="left:976px;top:1015.45px;width:1px;height:5.5px;background:#8fd1a7;"></div>
<div class="b" style="left:1147px;top:1015.45px;width:1px;height:5.5px;background:#3287d6;"></div>
<div class="b" style="left:1148px;top:1015.45px;width:1px;height:5.5px;background:#f59a99;"></div>
<div class="b" style="left:1299px;top:1015.45px;width:1px;height:5.5px;background:#3287d6;"></div>
<div class="b" style="left:1300px;top:1015.45px;width:1px;height:5.5px;background:#f59a99;"></div>
<div class="b" style="left:17px;top:1032px;width:2031px;height:1px;background:#ebecee;"></div>
</body></html>
